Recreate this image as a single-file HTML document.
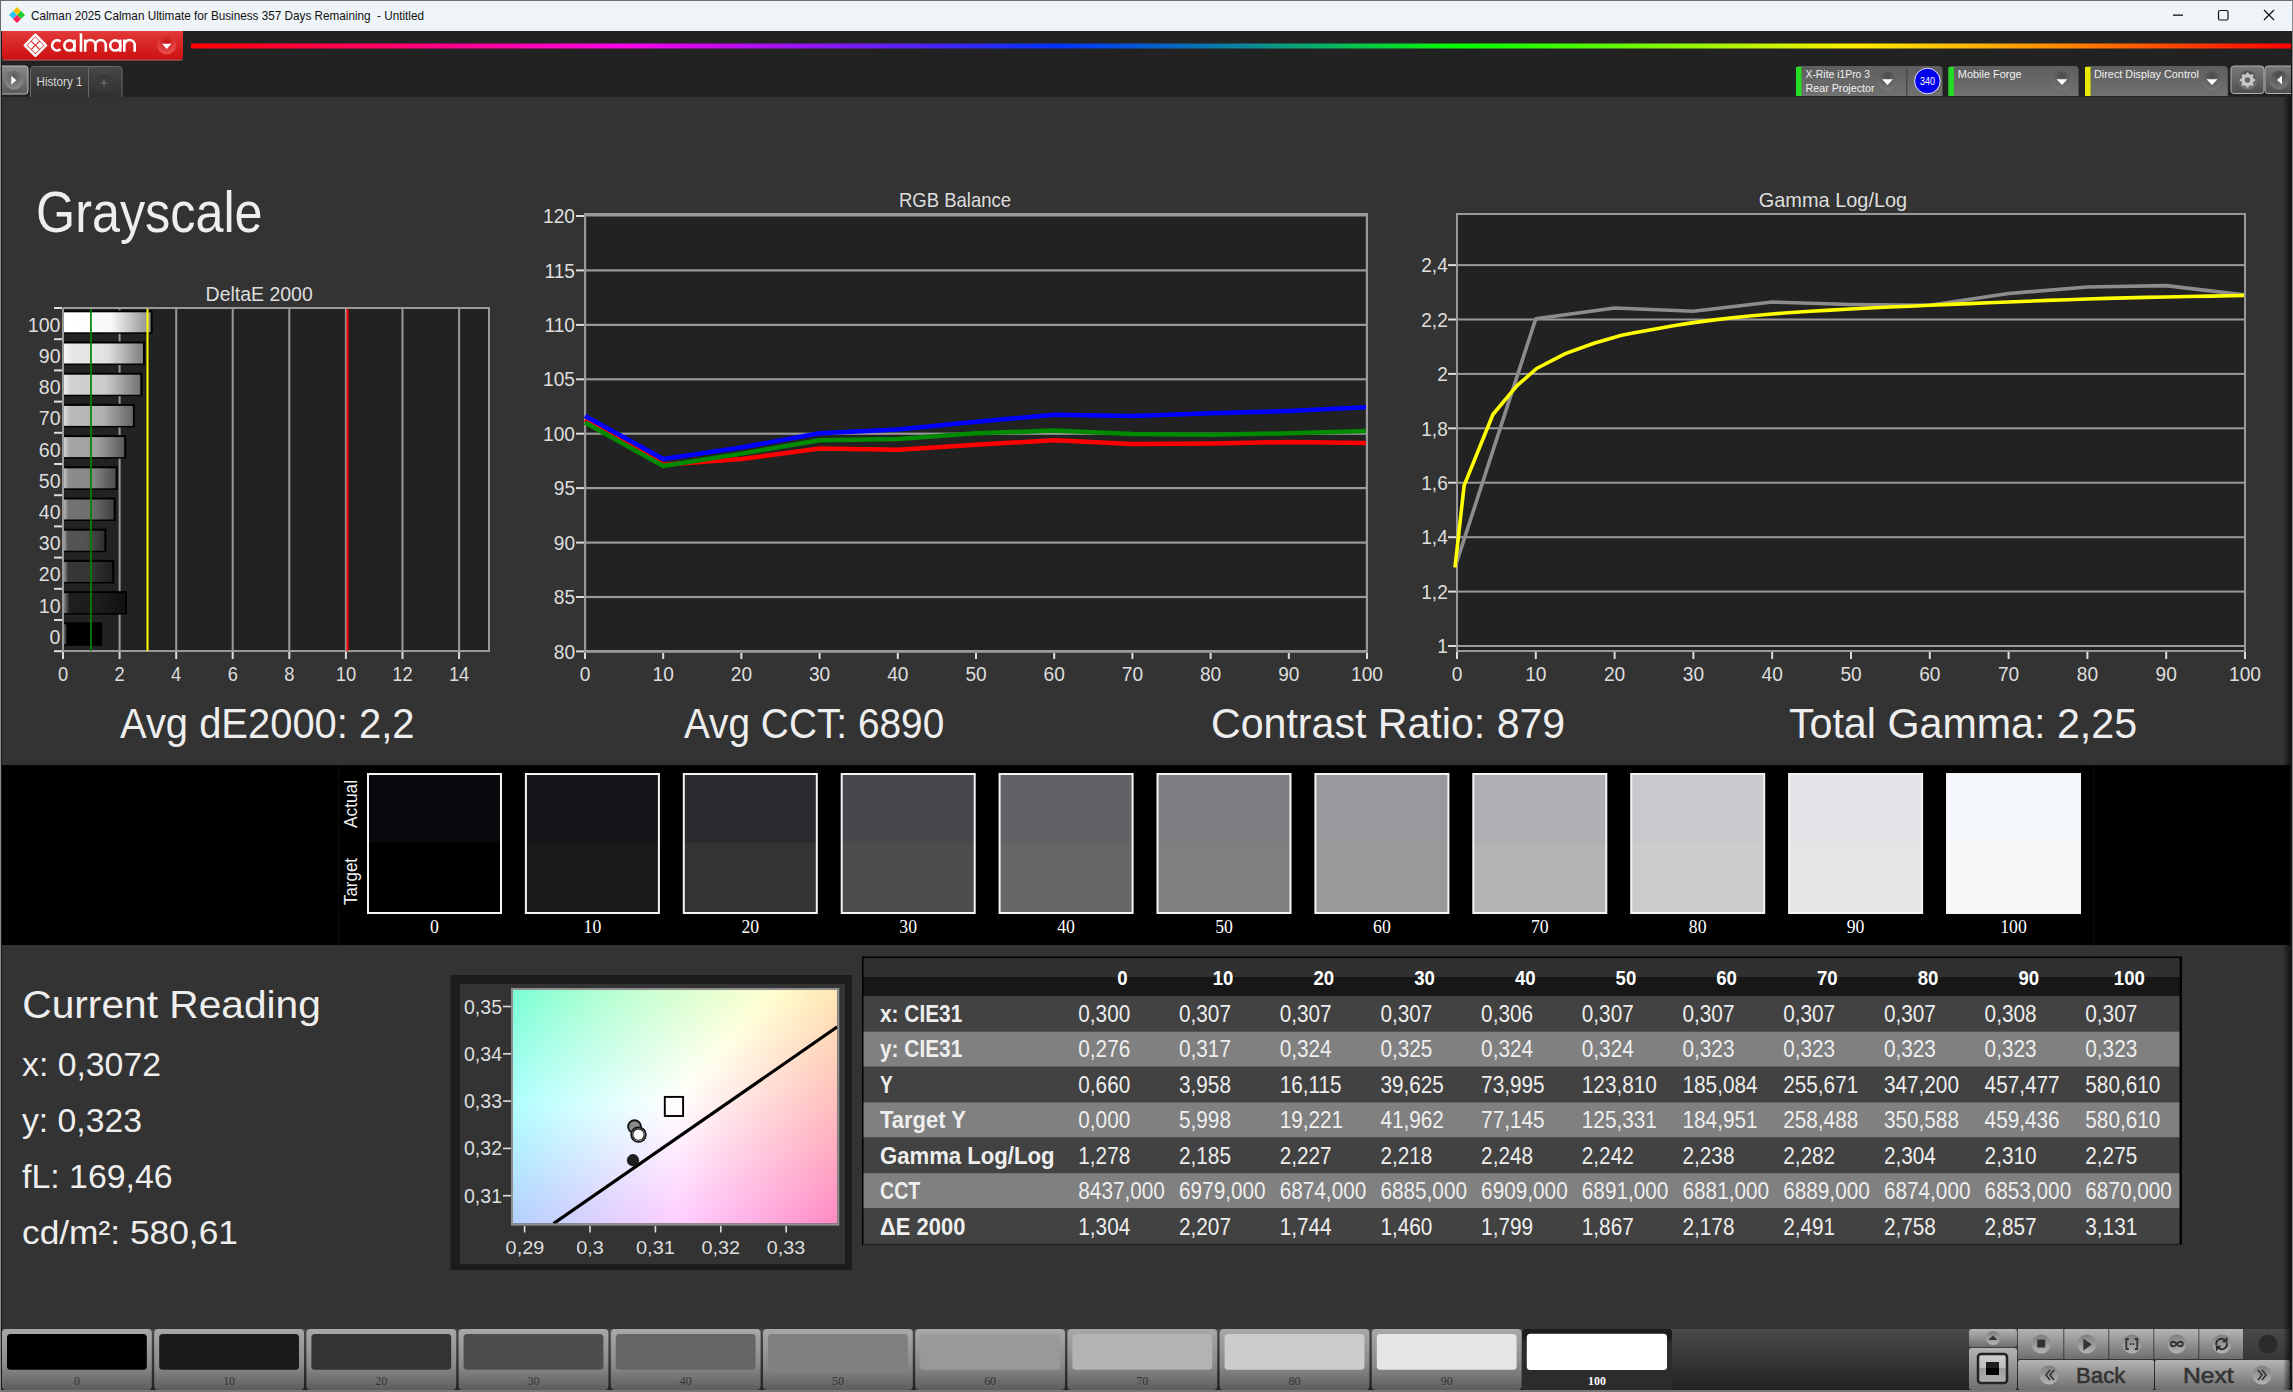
<!DOCTYPE html><html><head><meta charset="utf-8"><style>html,body{margin:0;padding:0;background:#333;overflow:hidden}svg{display:block}</style></head><body><svg width="2293" height="1392" viewBox="0 0 2293 1392" font-family="Liberation Sans"><defs><linearGradient id="gRed" x1="0" y1="0" x2="0" y2="1"><stop offset="0" stop-color="#e23a3a"/><stop offset="1" stop-color="#cc0e0e"/></linearGradient><radialGradient id="gRedBtn" cx="0.5" cy="0.3" r="0.6"><stop offset="0" stop-color="#c81414"/><stop offset="1" stop-color="#e84a4a"/></radialGradient><linearGradient id="gRain" x1="191" y1="0" x2="2293" y2="0" gradientUnits="userSpaceOnUse"><stop offset="0" stop-color="#ff0000"/><stop offset="0.204" stop-color="#ff00e6"/><stop offset="0.412" stop-color="#0033ff"/><stop offset="0.51" stop-color="#0d8f8f"/><stop offset="0.605" stop-color="#00ff00"/><stop offset="0.792" stop-color="#ffee00"/><stop offset="0.89" stop-color="#ff8800"/><stop offset="1" stop-color="#ff0000"/></linearGradient><linearGradient id="gBtn" x1="0" y1="0" x2="0" y2="1"><stop offset="0" stop-color="#8a8a8a"/><stop offset="1" stop-color="#5a5a5a"/></linearGradient><radialGradient id="gCirc" cx="0.5" cy="0.3" r="0.7"><stop offset="0" stop-color="#5b5b5b"/><stop offset="1" stop-color="#8c8c8c"/></radialGradient><linearGradient id="gTab" x1="0" y1="0" x2="0" y2="1"><stop offset="0" stop-color="#484848"/><stop offset="1" stop-color="#2f2f2f"/></linearGradient><linearGradient id="gDev" x1="0" y1="0" x2="0" y2="1"><stop offset="0" stop-color="#5e5e5e"/><stop offset="1" stop-color="#717171"/></linearGradient><radialGradient id="gDrop" cx="0.5" cy="0.2" r="0.8"><stop offset="0" stop-color="#4a4a4a"/><stop offset="1" stop-color="#787878"/></radialGradient><linearGradient id="gBtn2" x1="0" y1="0" x2="0" y2="1"><stop offset="0" stop-color="#7a7a7a"/><stop offset="1" stop-color="#4e4e4e"/></linearGradient><linearGradient id="gBar0" x1="0" y1="0" x2="1" y2="0"><stop offset="0" stop-color="#6e6e6e"/><stop offset="0.09" stop-color="#000000"/><stop offset="0.55" stop-color="#000000"/><stop offset="1" stop-color="#000000"/></linearGradient><linearGradient id="gBar1" x1="0" y1="0" x2="1" y2="0"><stop offset="0" stop-color="#808080"/><stop offset="0.09" stop-color="#1e1e1e"/><stop offset="0.55" stop-color="#1d1d1d"/><stop offset="1" stop-color="#101010"/></linearGradient><linearGradient id="gBar2" x1="0" y1="0" x2="1" y2="0"><stop offset="0" stop-color="#8f8f8f"/><stop offset="0.09" stop-color="#373737"/><stop offset="0.55" stop-color="#353535"/><stop offset="1" stop-color="#1e1e1e"/></linearGradient><linearGradient id="gBar3" x1="0" y1="0" x2="1" y2="0"><stop offset="0" stop-color="#a1a1a1"/><stop offset="0.09" stop-color="#555555"/><stop offset="0.55" stop-color="#525252"/><stop offset="1" stop-color="#2e2e2e"/></linearGradient><linearGradient id="gBar4" x1="0" y1="0" x2="1" y2="0"><stop offset="0" stop-color="#b3b3b3"/><stop offset="0.09" stop-color="#737373"/><stop offset="0.55" stop-color="#6f6f6f"/><stop offset="1" stop-color="#3f3f3f"/></linearGradient><linearGradient id="gBar5" x1="0" y1="0" x2="1" y2="0"><stop offset="0" stop-color="#c2c2c2"/><stop offset="0.09" stop-color="#8c8c8c"/><stop offset="0.55" stop-color="#878787"/><stop offset="1" stop-color="#4d4d4d"/></linearGradient><linearGradient id="gBar6" x1="0" y1="0" x2="1" y2="0"><stop offset="0" stop-color="#d1d1d1"/><stop offset="0.09" stop-color="#a5a5a5"/><stop offset="0.55" stop-color="#a0a0a0"/><stop offset="1" stop-color="#5a5a5a"/></linearGradient><linearGradient id="gBar7" x1="0" y1="0" x2="1" y2="0"><stop offset="0" stop-color="#dddddd"/><stop offset="0.09" stop-color="#b9b9b9"/><stop offset="0.55" stop-color="#b3b3b3"/><stop offset="1" stop-color="#656565"/></linearGradient><linearGradient id="gBar8" x1="0" y1="0" x2="1" y2="0"><stop offset="0" stop-color="#ececec"/><stop offset="0.09" stop-color="#d2d2d2"/><stop offset="0.55" stop-color="#cbcbcb"/><stop offset="1" stop-color="#737373"/></linearGradient><linearGradient id="gBar9" x1="0" y1="0" x2="1" y2="0"><stop offset="0" stop-color="#f9f9f9"/><stop offset="0.09" stop-color="#e8e8e8"/><stop offset="0.55" stop-color="#e1e1e1"/><stop offset="1" stop-color="#7f7f7f"/></linearGradient><linearGradient id="gBar10" x1="0" y1="0" x2="1" y2="0"><stop offset="0" stop-color="#ffffff"/><stop offset="0.09" stop-color="#ffffff"/><stop offset="0.55" stop-color="#f7f7f7"/><stop offset="1" stop-color="#8c8c8c"/></linearGradient><linearGradient id="gC0"><stop offset="0.0000" stop-color="#71ffd4"/><stop offset="0.0278" stop-color="#79ffd4"/><stop offset="0.0556" stop-color="#80ffd4"/><stop offset="0.0833" stop-color="#87ffd4"/><stop offset="0.1111" stop-color="#8effd4"/><stop offset="0.1389" stop-color="#94ffd4"/><stop offset="0.1667" stop-color="#9affd3"/><stop offset="0.1944" stop-color="#a0ffd3"/><stop offset="0.2222" stop-color="#a5ffd3"/><stop offset="0.2500" stop-color="#abffd3"/><stop offset="0.2778" stop-color="#b0ffd3"/><stop offset="0.3056" stop-color="#b5ffd3"/><stop offset="0.3333" stop-color="#baffd2"/><stop offset="0.3611" stop-color="#bfffd2"/><stop offset="0.3889" stop-color="#c4ffd2"/><stop offset="0.4167" stop-color="#c9ffd2"/><stop offset="0.4444" stop-color="#cdffd2"/><stop offset="0.4722" stop-color="#d2ffd1"/><stop offset="0.5000" stop-color="#d6ffd1"/><stop offset="0.5278" stop-color="#daffd1"/><stop offset="0.5556" stop-color="#dfffd1"/><stop offset="0.5833" stop-color="#e3ffd1"/><stop offset="0.6111" stop-color="#e7ffd1"/><stop offset="0.6389" stop-color="#ebffd0"/><stop offset="0.6667" stop-color="#efffd0"/><stop offset="0.6944" stop-color="#f3ffd0"/><stop offset="0.7222" stop-color="#f7ffd0"/><stop offset="0.7500" stop-color="#fbffd0"/><stop offset="0.7778" stop-color="#ffffcf"/><stop offset="0.8056" stop-color="#fffccc"/><stop offset="0.8333" stop-color="#fff8c8"/><stop offset="0.8611" stop-color="#fff4c4"/><stop offset="0.8889" stop-color="#fff0c0"/><stop offset="0.9167" stop-color="#ffedbb"/><stop offset="0.9444" stop-color="#ffe9b7"/><stop offset="0.9722" stop-color="#ffe6b3"/><stop offset="1.0000" stop-color="#ffe2af"/></linearGradient><linearGradient id="gC1"><stop offset="0.0000" stop-color="#76ffd8"/><stop offset="0.0278" stop-color="#7effd8"/><stop offset="0.0556" stop-color="#85ffd7"/><stop offset="0.0833" stop-color="#8cffd7"/><stop offset="0.1111" stop-color="#92ffd7"/><stop offset="0.1389" stop-color="#98ffd7"/><stop offset="0.1667" stop-color="#9effd7"/><stop offset="0.1944" stop-color="#a4ffd7"/><stop offset="0.2222" stop-color="#a9ffd7"/><stop offset="0.2500" stop-color="#afffd6"/><stop offset="0.2778" stop-color="#b4ffd6"/><stop offset="0.3056" stop-color="#b9ffd6"/><stop offset="0.3333" stop-color="#beffd6"/><stop offset="0.3611" stop-color="#c3ffd6"/><stop offset="0.3889" stop-color="#c7ffd6"/><stop offset="0.4167" stop-color="#ccffd5"/><stop offset="0.4444" stop-color="#d0ffd5"/><stop offset="0.4722" stop-color="#d5ffd5"/><stop offset="0.5000" stop-color="#d9ffd5"/><stop offset="0.5278" stop-color="#deffd5"/><stop offset="0.5556" stop-color="#e2ffd5"/><stop offset="0.5833" stop-color="#e6ffd4"/><stop offset="0.6111" stop-color="#eaffd4"/><stop offset="0.6389" stop-color="#eeffd4"/><stop offset="0.6667" stop-color="#f2ffd4"/><stop offset="0.6944" stop-color="#f6ffd4"/><stop offset="0.7222" stop-color="#faffd4"/><stop offset="0.7500" stop-color="#feffd3"/><stop offset="0.7778" stop-color="#fffcd0"/><stop offset="0.8056" stop-color="#fff8cc"/><stop offset="0.8333" stop-color="#fff5c8"/><stop offset="0.8611" stop-color="#fff1c4"/><stop offset="0.8889" stop-color="#ffedc0"/><stop offset="0.9167" stop-color="#ffeabc"/><stop offset="0.9444" stop-color="#ffe6b8"/><stop offset="0.9722" stop-color="#ffe2b4"/><stop offset="1.0000" stop-color="#ffdfb0"/></linearGradient><linearGradient id="gC2"><stop offset="0.0000" stop-color="#7bffdb"/><stop offset="0.0278" stop-color="#82ffdb"/><stop offset="0.0556" stop-color="#89ffdb"/><stop offset="0.0833" stop-color="#90ffdb"/><stop offset="0.1111" stop-color="#96ffdb"/><stop offset="0.1389" stop-color="#9cffdb"/><stop offset="0.1667" stop-color="#a2ffda"/><stop offset="0.1944" stop-color="#a8ffda"/><stop offset="0.2222" stop-color="#adffda"/><stop offset="0.2500" stop-color="#b2ffda"/><stop offset="0.2778" stop-color="#b8ffda"/><stop offset="0.3056" stop-color="#bdffda"/><stop offset="0.3333" stop-color="#c1ffda"/><stop offset="0.3611" stop-color="#c6ffd9"/><stop offset="0.3889" stop-color="#cbffd9"/><stop offset="0.4167" stop-color="#cfffd9"/><stop offset="0.4444" stop-color="#d4ffd9"/><stop offset="0.4722" stop-color="#d8ffd9"/><stop offset="0.5000" stop-color="#ddffd9"/><stop offset="0.5278" stop-color="#e1ffd8"/><stop offset="0.5556" stop-color="#e5ffd8"/><stop offset="0.5833" stop-color="#e9ffd8"/><stop offset="0.6111" stop-color="#edffd8"/><stop offset="0.6389" stop-color="#f1ffd8"/><stop offset="0.6667" stop-color="#f5ffd8"/><stop offset="0.6944" stop-color="#f9ffd8"/><stop offset="0.7222" stop-color="#fdffd7"/><stop offset="0.7500" stop-color="#fffdd5"/><stop offset="0.7778" stop-color="#fff9d1"/><stop offset="0.8056" stop-color="#fff5cd"/><stop offset="0.8333" stop-color="#fff2c9"/><stop offset="0.8611" stop-color="#ffeec5"/><stop offset="0.8889" stop-color="#ffeac1"/><stop offset="0.9167" stop-color="#ffe6bd"/><stop offset="0.9444" stop-color="#ffe3b9"/><stop offset="0.9722" stop-color="#ffdfb5"/><stop offset="1.0000" stop-color="#ffdcb1"/></linearGradient><linearGradient id="gC3"><stop offset="0.0000" stop-color="#80ffdf"/><stop offset="0.0278" stop-color="#87ffdf"/><stop offset="0.0556" stop-color="#8effde"/><stop offset="0.0833" stop-color="#94ffde"/><stop offset="0.1111" stop-color="#9affde"/><stop offset="0.1389" stop-color="#a0ffde"/><stop offset="0.1667" stop-color="#a6ffde"/><stop offset="0.1944" stop-color="#acffde"/><stop offset="0.2222" stop-color="#b1ffde"/><stop offset="0.2500" stop-color="#b6ffde"/><stop offset="0.2778" stop-color="#bbffdd"/><stop offset="0.3056" stop-color="#c0ffdd"/><stop offset="0.3333" stop-color="#c5ffdd"/><stop offset="0.3611" stop-color="#caffdd"/><stop offset="0.3889" stop-color="#ceffdd"/><stop offset="0.4167" stop-color="#d3ffdd"/><stop offset="0.4444" stop-color="#d7ffdd"/><stop offset="0.4722" stop-color="#dcffdc"/><stop offset="0.5000" stop-color="#e0ffdc"/><stop offset="0.5278" stop-color="#e4ffdc"/><stop offset="0.5556" stop-color="#e8ffdc"/><stop offset="0.5833" stop-color="#edffdc"/><stop offset="0.6111" stop-color="#f1ffdc"/><stop offset="0.6389" stop-color="#f5ffdc"/><stop offset="0.6667" stop-color="#f9ffdb"/><stop offset="0.6944" stop-color="#fdffdb"/><stop offset="0.7222" stop-color="#fffeda"/><stop offset="0.7500" stop-color="#fffad6"/><stop offset="0.7778" stop-color="#fff6d2"/><stop offset="0.8056" stop-color="#fff2ce"/><stop offset="0.8333" stop-color="#ffeeca"/><stop offset="0.8611" stop-color="#ffebc6"/><stop offset="0.8889" stop-color="#ffe7c2"/><stop offset="0.9167" stop-color="#ffe3be"/><stop offset="0.9444" stop-color="#ffe0ba"/><stop offset="0.9722" stop-color="#ffdcb6"/><stop offset="1.0000" stop-color="#ffd8b2"/></linearGradient><linearGradient id="gC4"><stop offset="0.0000" stop-color="#85ffe2"/><stop offset="0.0278" stop-color="#8cffe2"/><stop offset="0.0556" stop-color="#92ffe2"/><stop offset="0.0833" stop-color="#99ffe2"/><stop offset="0.1111" stop-color="#9fffe2"/><stop offset="0.1389" stop-color="#a4ffe1"/><stop offset="0.1667" stop-color="#aaffe1"/><stop offset="0.1944" stop-color="#afffe1"/><stop offset="0.2222" stop-color="#b5ffe1"/><stop offset="0.2500" stop-color="#baffe1"/><stop offset="0.2778" stop-color="#bfffe1"/><stop offset="0.3056" stop-color="#c4ffe1"/><stop offset="0.3333" stop-color="#c8ffe1"/><stop offset="0.3611" stop-color="#cdffe1"/><stop offset="0.3889" stop-color="#d2ffe0"/><stop offset="0.4167" stop-color="#d6ffe0"/><stop offset="0.4444" stop-color="#dbffe0"/><stop offset="0.4722" stop-color="#dfffe0"/><stop offset="0.5000" stop-color="#e3ffe0"/><stop offset="0.5278" stop-color="#e8ffe0"/><stop offset="0.5556" stop-color="#ecffe0"/><stop offset="0.5833" stop-color="#f0ffe0"/><stop offset="0.6111" stop-color="#f4ffdf"/><stop offset="0.6389" stop-color="#f8ffdf"/><stop offset="0.6667" stop-color="#fcffdf"/><stop offset="0.6944" stop-color="#fffede"/><stop offset="0.7222" stop-color="#fffada"/><stop offset="0.7500" stop-color="#fff6d6"/><stop offset="0.7778" stop-color="#fff3d2"/><stop offset="0.8056" stop-color="#ffefce"/><stop offset="0.8333" stop-color="#ffebca"/><stop offset="0.8611" stop-color="#ffe7c6"/><stop offset="0.8889" stop-color="#ffe4c2"/><stop offset="0.9167" stop-color="#ffe0be"/><stop offset="0.9444" stop-color="#ffdcba"/><stop offset="0.9722" stop-color="#ffd9b7"/><stop offset="1.0000" stop-color="#ffd5b3"/></linearGradient><linearGradient id="gC5"><stop offset="0.0000" stop-color="#89ffe5"/><stop offset="0.0278" stop-color="#90ffe5"/><stop offset="0.0556" stop-color="#97ffe5"/><stop offset="0.0833" stop-color="#9dffe5"/><stop offset="0.1111" stop-color="#a3ffe5"/><stop offset="0.1389" stop-color="#a8ffe5"/><stop offset="0.1667" stop-color="#aeffe5"/><stop offset="0.1944" stop-color="#b3ffe5"/><stop offset="0.2222" stop-color="#b8ffe5"/><stop offset="0.2500" stop-color="#bdffe5"/><stop offset="0.2778" stop-color="#c2ffe4"/><stop offset="0.3056" stop-color="#c7ffe4"/><stop offset="0.3333" stop-color="#ccffe4"/><stop offset="0.3611" stop-color="#d1ffe4"/><stop offset="0.3889" stop-color="#d5ffe4"/><stop offset="0.4167" stop-color="#daffe4"/><stop offset="0.4444" stop-color="#deffe4"/><stop offset="0.4722" stop-color="#e2ffe4"/><stop offset="0.5000" stop-color="#e7ffe4"/><stop offset="0.5278" stop-color="#ebffe4"/><stop offset="0.5556" stop-color="#efffe3"/><stop offset="0.5833" stop-color="#f3ffe3"/><stop offset="0.6111" stop-color="#f7ffe3"/><stop offset="0.6389" stop-color="#fbffe3"/><stop offset="0.6667" stop-color="#ffffe3"/><stop offset="0.6944" stop-color="#fffbdf"/><stop offset="0.7222" stop-color="#fff7db"/><stop offset="0.7500" stop-color="#fff3d7"/><stop offset="0.7778" stop-color="#ffefd3"/><stop offset="0.8056" stop-color="#ffeccf"/><stop offset="0.8333" stop-color="#ffe8cb"/><stop offset="0.8611" stop-color="#ffe4c7"/><stop offset="0.8889" stop-color="#ffe0c3"/><stop offset="0.9167" stop-color="#ffddbf"/><stop offset="0.9444" stop-color="#ffd9bb"/><stop offset="0.9722" stop-color="#ffd6b7"/><stop offset="1.0000" stop-color="#ffd2b3"/></linearGradient><linearGradient id="gC6"><stop offset="0.0000" stop-color="#8effe9"/><stop offset="0.0278" stop-color="#95ffe9"/><stop offset="0.0556" stop-color="#9bffe9"/><stop offset="0.0833" stop-color="#a1ffe9"/><stop offset="0.1111" stop-color="#a7ffe9"/><stop offset="0.1389" stop-color="#acffe8"/><stop offset="0.1667" stop-color="#b2ffe8"/><stop offset="0.1944" stop-color="#b7ffe8"/><stop offset="0.2222" stop-color="#bcffe8"/><stop offset="0.2500" stop-color="#c1ffe8"/><stop offset="0.2778" stop-color="#c6ffe8"/><stop offset="0.3056" stop-color="#cbffe8"/><stop offset="0.3333" stop-color="#d0ffe8"/><stop offset="0.3611" stop-color="#d4ffe8"/><stop offset="0.3889" stop-color="#d9ffe8"/><stop offset="0.4167" stop-color="#ddffe8"/><stop offset="0.4444" stop-color="#e2ffe8"/><stop offset="0.4722" stop-color="#e6ffe7"/><stop offset="0.5000" stop-color="#eaffe7"/><stop offset="0.5278" stop-color="#eeffe7"/><stop offset="0.5556" stop-color="#f2ffe7"/><stop offset="0.5833" stop-color="#f7ffe7"/><stop offset="0.6111" stop-color="#fbffe7"/><stop offset="0.6389" stop-color="#ffffe7"/><stop offset="0.6667" stop-color="#fffbe3"/><stop offset="0.6944" stop-color="#fff8df"/><stop offset="0.7222" stop-color="#fff4db"/><stop offset="0.7500" stop-color="#fff0d7"/><stop offset="0.7778" stop-color="#ffecd3"/><stop offset="0.8056" stop-color="#ffe8cf"/><stop offset="0.8333" stop-color="#ffe5cb"/><stop offset="0.8611" stop-color="#ffe1c8"/><stop offset="0.8889" stop-color="#ffddc4"/><stop offset="0.9167" stop-color="#ffdac0"/><stop offset="0.9444" stop-color="#ffd6bc"/><stop offset="0.9722" stop-color="#ffd2b8"/><stop offset="1.0000" stop-color="#ffcfb4"/></linearGradient><linearGradient id="gC7"><stop offset="0.0000" stop-color="#93ffec"/><stop offset="0.0278" stop-color="#99ffec"/><stop offset="0.0556" stop-color="#9fffec"/><stop offset="0.0833" stop-color="#a5ffec"/><stop offset="0.1111" stop-color="#abffec"/><stop offset="0.1389" stop-color="#b0ffec"/><stop offset="0.1667" stop-color="#b6ffec"/><stop offset="0.1944" stop-color="#bbffec"/><stop offset="0.2222" stop-color="#c0ffec"/><stop offset="0.2500" stop-color="#c5ffec"/><stop offset="0.2778" stop-color="#caffec"/><stop offset="0.3056" stop-color="#ceffec"/><stop offset="0.3333" stop-color="#d3ffeb"/><stop offset="0.3611" stop-color="#d8ffeb"/><stop offset="0.3889" stop-color="#dcffeb"/><stop offset="0.4167" stop-color="#e1ffeb"/><stop offset="0.4444" stop-color="#e5ffeb"/><stop offset="0.4722" stop-color="#e9ffeb"/><stop offset="0.5000" stop-color="#edffeb"/><stop offset="0.5278" stop-color="#f2ffeb"/><stop offset="0.5556" stop-color="#f6ffeb"/><stop offset="0.5833" stop-color="#faffeb"/><stop offset="0.6111" stop-color="#feffeb"/><stop offset="0.6389" stop-color="#fffce8"/><stop offset="0.6667" stop-color="#fff8e4"/><stop offset="0.6944" stop-color="#fff4e0"/><stop offset="0.7222" stop-color="#fff0dc"/><stop offset="0.7500" stop-color="#ffedd8"/><stop offset="0.7778" stop-color="#ffe9d4"/><stop offset="0.8056" stop-color="#ffe5d0"/><stop offset="0.8333" stop-color="#ffe1cc"/><stop offset="0.8611" stop-color="#ffdec8"/><stop offset="0.8889" stop-color="#ffdac4"/><stop offset="0.9167" stop-color="#ffd6c1"/><stop offset="0.9444" stop-color="#ffd3bd"/><stop offset="0.9722" stop-color="#ffcfb9"/><stop offset="1.0000" stop-color="#ffcbb5"/></linearGradient><linearGradient id="gC8"><stop offset="0.0000" stop-color="#97fff0"/><stop offset="0.0278" stop-color="#9dfff0"/><stop offset="0.0556" stop-color="#a3fff0"/><stop offset="0.0833" stop-color="#a9fff0"/><stop offset="0.1111" stop-color="#affff0"/><stop offset="0.1389" stop-color="#b4ffef"/><stop offset="0.1667" stop-color="#b9ffef"/><stop offset="0.1944" stop-color="#bfffef"/><stop offset="0.2222" stop-color="#c4ffef"/><stop offset="0.2500" stop-color="#c8ffef"/><stop offset="0.2778" stop-color="#cdffef"/><stop offset="0.3056" stop-color="#d2ffef"/><stop offset="0.3333" stop-color="#d7ffef"/><stop offset="0.3611" stop-color="#dbffef"/><stop offset="0.3889" stop-color="#e0ffef"/><stop offset="0.4167" stop-color="#e4ffef"/><stop offset="0.4444" stop-color="#e8ffef"/><stop offset="0.4722" stop-color="#edffef"/><stop offset="0.5000" stop-color="#f1ffef"/><stop offset="0.5278" stop-color="#f5ffef"/><stop offset="0.5556" stop-color="#f9ffef"/><stop offset="0.5833" stop-color="#fdffef"/><stop offset="0.6111" stop-color="#fffdec"/><stop offset="0.6389" stop-color="#fff9e8"/><stop offset="0.6667" stop-color="#fff5e4"/><stop offset="0.6944" stop-color="#fff1e0"/><stop offset="0.7222" stop-color="#ffeddc"/><stop offset="0.7500" stop-color="#ffe9d8"/><stop offset="0.7778" stop-color="#ffe5d4"/><stop offset="0.8056" stop-color="#ffe2d1"/><stop offset="0.8333" stop-color="#ffdecd"/><stop offset="0.8611" stop-color="#ffdac9"/><stop offset="0.8889" stop-color="#ffd7c5"/><stop offset="0.9167" stop-color="#ffd3c1"/><stop offset="0.9444" stop-color="#ffcfbd"/><stop offset="0.9722" stop-color="#ffccba"/><stop offset="1.0000" stop-color="#ffc8b6"/></linearGradient><linearGradient id="gC9"><stop offset="0.0000" stop-color="#9bfff3"/><stop offset="0.0278" stop-color="#a1fff3"/><stop offset="0.0556" stop-color="#a7fff3"/><stop offset="0.0833" stop-color="#adfff3"/><stop offset="0.1111" stop-color="#b3fff3"/><stop offset="0.1389" stop-color="#b8fff3"/><stop offset="0.1667" stop-color="#bdfff3"/><stop offset="0.1944" stop-color="#c2fff3"/><stop offset="0.2222" stop-color="#c7fff3"/><stop offset="0.2500" stop-color="#ccfff3"/><stop offset="0.2778" stop-color="#d1fff3"/><stop offset="0.3056" stop-color="#d6fff3"/><stop offset="0.3333" stop-color="#dafff3"/><stop offset="0.3611" stop-color="#dffff3"/><stop offset="0.3889" stop-color="#e3fff3"/><stop offset="0.4167" stop-color="#e7fff3"/><stop offset="0.4444" stop-color="#ecfff2"/><stop offset="0.4722" stop-color="#f0fff2"/><stop offset="0.5000" stop-color="#f4fff2"/><stop offset="0.5278" stop-color="#f8fff2"/><stop offset="0.5556" stop-color="#fdfff2"/><stop offset="0.5833" stop-color="#fffdf1"/><stop offset="0.6111" stop-color="#fff9ed"/><stop offset="0.6389" stop-color="#fff5e9"/><stop offset="0.6667" stop-color="#fff2e5"/><stop offset="0.6944" stop-color="#ffeee1"/><stop offset="0.7222" stop-color="#ffeadd"/><stop offset="0.7500" stop-color="#ffe6d9"/><stop offset="0.7778" stop-color="#ffe2d5"/><stop offset="0.8056" stop-color="#ffded1"/><stop offset="0.8333" stop-color="#ffdbcd"/><stop offset="0.8611" stop-color="#ffd7c9"/><stop offset="0.8889" stop-color="#ffd3c6"/><stop offset="0.9167" stop-color="#ffd0c2"/><stop offset="0.9444" stop-color="#ffccbe"/><stop offset="0.9722" stop-color="#ffc8ba"/><stop offset="1.0000" stop-color="#ffc5b7"/></linearGradient><linearGradient id="gC10"><stop offset="0.0000" stop-color="#a0fff7"/><stop offset="0.0278" stop-color="#a6fff7"/><stop offset="0.0556" stop-color="#abfff7"/><stop offset="0.0833" stop-color="#b1fff7"/><stop offset="0.1111" stop-color="#b6fff6"/><stop offset="0.1389" stop-color="#bcfff6"/><stop offset="0.1667" stop-color="#c1fff6"/><stop offset="0.1944" stop-color="#c6fff6"/><stop offset="0.2222" stop-color="#cbfff6"/><stop offset="0.2500" stop-color="#d0fff6"/><stop offset="0.2778" stop-color="#d4fff6"/><stop offset="0.3056" stop-color="#d9fff6"/><stop offset="0.3333" stop-color="#defff6"/><stop offset="0.3611" stop-color="#e2fff6"/><stop offset="0.3889" stop-color="#e7fff6"/><stop offset="0.4167" stop-color="#ebfff6"/><stop offset="0.4444" stop-color="#effff6"/><stop offset="0.4722" stop-color="#f3fff6"/><stop offset="0.5000" stop-color="#f8fff6"/><stop offset="0.5278" stop-color="#fcfff6"/><stop offset="0.5556" stop-color="#fffef5"/><stop offset="0.5833" stop-color="#fffaf1"/><stop offset="0.6111" stop-color="#fff6ed"/><stop offset="0.6389" stop-color="#fff2e9"/><stop offset="0.6667" stop-color="#ffeee5"/><stop offset="0.6944" stop-color="#ffeae1"/><stop offset="0.7222" stop-color="#ffe6dd"/><stop offset="0.7500" stop-color="#ffe3d9"/><stop offset="0.7778" stop-color="#ffdfd5"/><stop offset="0.8056" stop-color="#ffdbd2"/><stop offset="0.8333" stop-color="#ffd7ce"/><stop offset="0.8611" stop-color="#ffd4ca"/><stop offset="0.8889" stop-color="#ffd0c6"/><stop offset="0.9167" stop-color="#ffccc3"/><stop offset="0.9444" stop-color="#ffc9bf"/><stop offset="0.9722" stop-color="#ffc5bb"/><stop offset="1.0000" stop-color="#ffc1b7"/></linearGradient><linearGradient id="gC11"><stop offset="0.0000" stop-color="#a4fffa"/><stop offset="0.0278" stop-color="#aafffa"/><stop offset="0.0556" stop-color="#affffa"/><stop offset="0.0833" stop-color="#b5fffa"/><stop offset="0.1111" stop-color="#bafffa"/><stop offset="0.1389" stop-color="#c0fffa"/><stop offset="0.1667" stop-color="#c5fffa"/><stop offset="0.1944" stop-color="#cafffa"/><stop offset="0.2222" stop-color="#cffffa"/><stop offset="0.2500" stop-color="#d3fffa"/><stop offset="0.2778" stop-color="#d8fffa"/><stop offset="0.3056" stop-color="#ddfffa"/><stop offset="0.3333" stop-color="#e1fffa"/><stop offset="0.3611" stop-color="#e6fffa"/><stop offset="0.3889" stop-color="#eafffa"/><stop offset="0.4167" stop-color="#eefffa"/><stop offset="0.4444" stop-color="#f3fffa"/><stop offset="0.4722" stop-color="#f7fffa"/><stop offset="0.5000" stop-color="#fbfffa"/><stop offset="0.5278" stop-color="#fffffa"/><stop offset="0.5556" stop-color="#fffbf5"/><stop offset="0.5833" stop-color="#fff7f1"/><stop offset="0.6111" stop-color="#fff3ed"/><stop offset="0.6389" stop-color="#ffefe9"/><stop offset="0.6667" stop-color="#ffebe5"/><stop offset="0.6944" stop-color="#ffe7e2"/><stop offset="0.7222" stop-color="#ffe3de"/><stop offset="0.7500" stop-color="#ffdfda"/><stop offset="0.7778" stop-color="#ffdbd6"/><stop offset="0.8056" stop-color="#ffd8d2"/><stop offset="0.8333" stop-color="#ffd4ce"/><stop offset="0.8611" stop-color="#ffd0cb"/><stop offset="0.8889" stop-color="#ffccc7"/><stop offset="0.9167" stop-color="#ffc9c3"/><stop offset="0.9444" stop-color="#ffc5bf"/><stop offset="0.9722" stop-color="#ffc1bc"/><stop offset="1.0000" stop-color="#ffbeb8"/></linearGradient><linearGradient id="gC12"><stop offset="0.0000" stop-color="#a8fffe"/><stop offset="0.0278" stop-color="#aefffe"/><stop offset="0.0556" stop-color="#b3fffe"/><stop offset="0.0833" stop-color="#b9fffe"/><stop offset="0.1111" stop-color="#befffe"/><stop offset="0.1389" stop-color="#c3fffe"/><stop offset="0.1667" stop-color="#c8fffe"/><stop offset="0.1944" stop-color="#cdfffe"/><stop offset="0.2222" stop-color="#d2fffe"/><stop offset="0.2500" stop-color="#d7fffe"/><stop offset="0.2778" stop-color="#dcfffe"/><stop offset="0.3056" stop-color="#e0fffe"/><stop offset="0.3333" stop-color="#e5fffe"/><stop offset="0.3611" stop-color="#e9fffe"/><stop offset="0.3889" stop-color="#eefffe"/><stop offset="0.4167" stop-color="#f2fffe"/><stop offset="0.4444" stop-color="#f6fffe"/><stop offset="0.4722" stop-color="#fafffe"/><stop offset="0.5000" stop-color="#fffffe"/><stop offset="0.5278" stop-color="#fffbfa"/><stop offset="0.5556" stop-color="#fff7f6"/><stop offset="0.5833" stop-color="#fff3f2"/><stop offset="0.6111" stop-color="#ffefee"/><stop offset="0.6389" stop-color="#ffebea"/><stop offset="0.6667" stop-color="#ffe7e6"/><stop offset="0.6944" stop-color="#ffe3e2"/><stop offset="0.7222" stop-color="#ffe0de"/><stop offset="0.7500" stop-color="#ffdcda"/><stop offset="0.7778" stop-color="#ffd8d7"/><stop offset="0.8056" stop-color="#ffd4d3"/><stop offset="0.8333" stop-color="#ffd0cf"/><stop offset="0.8611" stop-color="#ffcdcb"/><stop offset="0.8889" stop-color="#ffc9c8"/><stop offset="0.9167" stop-color="#ffc5c4"/><stop offset="0.9444" stop-color="#ffc2c0"/><stop offset="0.9722" stop-color="#ffbebc"/><stop offset="1.0000" stop-color="#ffbab9"/></linearGradient><linearGradient id="gC13"><stop offset="0.0000" stop-color="#aafdff"/><stop offset="0.0278" stop-color="#b0fdff"/><stop offset="0.0556" stop-color="#b5fdff"/><stop offset="0.0833" stop-color="#bbfdff"/><stop offset="0.1111" stop-color="#c0fdff"/><stop offset="0.1389" stop-color="#c5fdff"/><stop offset="0.1667" stop-color="#cafdff"/><stop offset="0.1944" stop-color="#cffdff"/><stop offset="0.2222" stop-color="#d4fdff"/><stop offset="0.2500" stop-color="#d8fdff"/><stop offset="0.2778" stop-color="#ddfdff"/><stop offset="0.3056" stop-color="#e2fdff"/><stop offset="0.3333" stop-color="#e6fdff"/><stop offset="0.3611" stop-color="#ebfdff"/><stop offset="0.3889" stop-color="#effdff"/><stop offset="0.4167" stop-color="#f3fdff"/><stop offset="0.4444" stop-color="#f7fdff"/><stop offset="0.4722" stop-color="#fcfdff"/><stop offset="0.5000" stop-color="#fffcfe"/><stop offset="0.5278" stop-color="#fff8fa"/><stop offset="0.5556" stop-color="#fff4f6"/><stop offset="0.5833" stop-color="#fff0f2"/><stop offset="0.6111" stop-color="#ffecee"/><stop offset="0.6389" stop-color="#ffe8ea"/><stop offset="0.6667" stop-color="#ffe4e6"/><stop offset="0.6944" stop-color="#ffe0e2"/><stop offset="0.7222" stop-color="#ffdcdf"/><stop offset="0.7500" stop-color="#ffd8db"/><stop offset="0.7778" stop-color="#ffd5d7"/><stop offset="0.8056" stop-color="#ffd1d3"/><stop offset="0.8333" stop-color="#ffcdd0"/><stop offset="0.8611" stop-color="#ffc9cc"/><stop offset="0.8889" stop-color="#ffc6c8"/><stop offset="0.9167" stop-color="#ffc2c4"/><stop offset="0.9444" stop-color="#ffbec1"/><stop offset="0.9722" stop-color="#ffbabd"/><stop offset="1.0000" stop-color="#ffb7b9"/></linearGradient><linearGradient id="gC14"><stop offset="0.0000" stop-color="#aafaff"/><stop offset="0.0278" stop-color="#b0faff"/><stop offset="0.0556" stop-color="#b6f9ff"/><stop offset="0.0833" stop-color="#bbf9ff"/><stop offset="0.1111" stop-color="#c0f9ff"/><stop offset="0.1389" stop-color="#c5f9ff"/><stop offset="0.1667" stop-color="#caf9ff"/><stop offset="0.1944" stop-color="#cff9ff"/><stop offset="0.2222" stop-color="#d4f9ff"/><stop offset="0.2500" stop-color="#d8f9ff"/><stop offset="0.2778" stop-color="#ddf9ff"/><stop offset="0.3056" stop-color="#e2f9ff"/><stop offset="0.3333" stop-color="#e6f9ff"/><stop offset="0.3611" stop-color="#eaf9ff"/><stop offset="0.3889" stop-color="#eff9ff"/><stop offset="0.4167" stop-color="#f3f9ff"/><stop offset="0.4444" stop-color="#f7f9ff"/><stop offset="0.4722" stop-color="#fbf9ff"/><stop offset="0.5000" stop-color="#fff9ff"/><stop offset="0.5278" stop-color="#fff4fa"/><stop offset="0.5556" stop-color="#fff0f6"/><stop offset="0.5833" stop-color="#ffecf2"/><stop offset="0.6111" stop-color="#ffe8ef"/><stop offset="0.6389" stop-color="#ffe4eb"/><stop offset="0.6667" stop-color="#ffe0e7"/><stop offset="0.6944" stop-color="#ffdde3"/><stop offset="0.7222" stop-color="#ffd9df"/><stop offset="0.7500" stop-color="#ffd5db"/><stop offset="0.7778" stop-color="#ffd1d8"/><stop offset="0.8056" stop-color="#ffcdd4"/><stop offset="0.8333" stop-color="#ffcad0"/><stop offset="0.8611" stop-color="#ffc6cc"/><stop offset="0.8889" stop-color="#ffc2c9"/><stop offset="0.9167" stop-color="#ffbec5"/><stop offset="0.9444" stop-color="#ffbbc1"/><stop offset="0.9722" stop-color="#ffb7be"/><stop offset="1.0000" stop-color="#ffb3ba"/></linearGradient><linearGradient id="gC15"><stop offset="0.0000" stop-color="#abf6ff"/><stop offset="0.0278" stop-color="#b0f6ff"/><stop offset="0.0556" stop-color="#b6f6ff"/><stop offset="0.0833" stop-color="#bbf6ff"/><stop offset="0.1111" stop-color="#c0f6ff"/><stop offset="0.1389" stop-color="#c5f6ff"/><stop offset="0.1667" stop-color="#caf6ff"/><stop offset="0.1944" stop-color="#cff6ff"/><stop offset="0.2222" stop-color="#d4f6ff"/><stop offset="0.2500" stop-color="#d8f6ff"/><stop offset="0.2778" stop-color="#ddf6ff"/><stop offset="0.3056" stop-color="#e2f6ff"/><stop offset="0.3333" stop-color="#e6f6ff"/><stop offset="0.3611" stop-color="#eaf5ff"/><stop offset="0.3889" stop-color="#eff5ff"/><stop offset="0.4167" stop-color="#f3f5ff"/><stop offset="0.4444" stop-color="#f7f5ff"/><stop offset="0.4722" stop-color="#fbf5ff"/><stop offset="0.5000" stop-color="#fff5ff"/><stop offset="0.5278" stop-color="#fff1fb"/><stop offset="0.5556" stop-color="#ffedf7"/><stop offset="0.5833" stop-color="#ffe9f3"/><stop offset="0.6111" stop-color="#ffe5ef"/><stop offset="0.6389" stop-color="#ffe1eb"/><stop offset="0.6667" stop-color="#ffdde7"/><stop offset="0.6944" stop-color="#ffd9e3"/><stop offset="0.7222" stop-color="#ffd5e0"/><stop offset="0.7500" stop-color="#ffd1dc"/><stop offset="0.7778" stop-color="#ffced8"/><stop offset="0.8056" stop-color="#ffcad4"/><stop offset="0.8333" stop-color="#ffc6d1"/><stop offset="0.8611" stop-color="#ffc2cd"/><stop offset="0.8889" stop-color="#ffbec9"/><stop offset="0.9167" stop-color="#ffbbc6"/><stop offset="0.9444" stop-color="#ffb7c2"/><stop offset="0.9722" stop-color="#ffb3be"/><stop offset="1.0000" stop-color="#ffafbb"/></linearGradient><linearGradient id="gC16"><stop offset="0.0000" stop-color="#abf3ff"/><stop offset="0.0278" stop-color="#b1f2ff"/><stop offset="0.0556" stop-color="#b6f2ff"/><stop offset="0.0833" stop-color="#bbf2ff"/><stop offset="0.1111" stop-color="#c0f2ff"/><stop offset="0.1389" stop-color="#c5f2ff"/><stop offset="0.1667" stop-color="#caf2ff"/><stop offset="0.1944" stop-color="#cff2ff"/><stop offset="0.2222" stop-color="#d4f2ff"/><stop offset="0.2500" stop-color="#d8f2ff"/><stop offset="0.2778" stop-color="#ddf2ff"/><stop offset="0.3056" stop-color="#e1f2ff"/><stop offset="0.3333" stop-color="#e6f2ff"/><stop offset="0.3611" stop-color="#eaf2ff"/><stop offset="0.3889" stop-color="#eef2ff"/><stop offset="0.4167" stop-color="#f3f2ff"/><stop offset="0.4444" stop-color="#f7f2ff"/><stop offset="0.4722" stop-color="#fbf2ff"/><stop offset="0.5000" stop-color="#fff1ff"/><stop offset="0.5278" stop-color="#ffedfb"/><stop offset="0.5556" stop-color="#ffe9f7"/><stop offset="0.5833" stop-color="#ffe5f3"/><stop offset="0.6111" stop-color="#ffe1ef"/><stop offset="0.6389" stop-color="#ffddeb"/><stop offset="0.6667" stop-color="#ffdae8"/><stop offset="0.6944" stop-color="#ffd6e4"/><stop offset="0.7222" stop-color="#ffd2e0"/><stop offset="0.7500" stop-color="#ffcedc"/><stop offset="0.7778" stop-color="#ffcad9"/><stop offset="0.8056" stop-color="#ffc6d5"/><stop offset="0.8333" stop-color="#ffc2d1"/><stop offset="0.8611" stop-color="#ffbfce"/><stop offset="0.8889" stop-color="#ffbbca"/><stop offset="0.9167" stop-color="#ffb7c6"/><stop offset="0.9444" stop-color="#ffb3c3"/><stop offset="0.9722" stop-color="#ffafbf"/><stop offset="1.0000" stop-color="#ffacbb"/></linearGradient><linearGradient id="gC17"><stop offset="0.0000" stop-color="#abefff"/><stop offset="0.0278" stop-color="#b1efff"/><stop offset="0.0556" stop-color="#b6efff"/><stop offset="0.0833" stop-color="#bbefff"/><stop offset="0.1111" stop-color="#c1efff"/><stop offset="0.1389" stop-color="#c6efff"/><stop offset="0.1667" stop-color="#caefff"/><stop offset="0.1944" stop-color="#cfefff"/><stop offset="0.2222" stop-color="#d4eeff"/><stop offset="0.2500" stop-color="#d8eeff"/><stop offset="0.2778" stop-color="#ddeeff"/><stop offset="0.3056" stop-color="#e1eeff"/><stop offset="0.3333" stop-color="#e6eeff"/><stop offset="0.3611" stop-color="#eaeeff"/><stop offset="0.3889" stop-color="#eeeeff"/><stop offset="0.4167" stop-color="#f2eeff"/><stop offset="0.4444" stop-color="#f7eeff"/><stop offset="0.4722" stop-color="#fbeeff"/><stop offset="0.5000" stop-color="#ffeeff"/><stop offset="0.5278" stop-color="#ffeafb"/><stop offset="0.5556" stop-color="#ffe6f7"/><stop offset="0.5833" stop-color="#ffe2f3"/><stop offset="0.6111" stop-color="#ffdef0"/><stop offset="0.6389" stop-color="#ffdaec"/><stop offset="0.6667" stop-color="#ffd6e8"/><stop offset="0.6944" stop-color="#ffd2e4"/><stop offset="0.7222" stop-color="#ffcee0"/><stop offset="0.7500" stop-color="#ffcadd"/><stop offset="0.7778" stop-color="#ffc6d9"/><stop offset="0.8056" stop-color="#ffc3d5"/><stop offset="0.8333" stop-color="#ffbfd2"/><stop offset="0.8611" stop-color="#ffbbce"/><stop offset="0.8889" stop-color="#ffb7ca"/><stop offset="0.9167" stop-color="#ffb3c7"/><stop offset="0.9444" stop-color="#ffb0c3"/><stop offset="0.9722" stop-color="#ffacc0"/><stop offset="1.0000" stop-color="#ffa8bc"/></linearGradient><linearGradient id="gC18"><stop offset="0.0000" stop-color="#acebff"/><stop offset="0.0278" stop-color="#b1ebff"/><stop offset="0.0556" stop-color="#b7ebff"/><stop offset="0.0833" stop-color="#bcebff"/><stop offset="0.1111" stop-color="#c1ebff"/><stop offset="0.1389" stop-color="#c6ebff"/><stop offset="0.1667" stop-color="#caebff"/><stop offset="0.1944" stop-color="#cfebff"/><stop offset="0.2222" stop-color="#d4ebff"/><stop offset="0.2500" stop-color="#d8ebff"/><stop offset="0.2778" stop-color="#ddebff"/><stop offset="0.3056" stop-color="#e1ebff"/><stop offset="0.3333" stop-color="#e6eaff"/><stop offset="0.3611" stop-color="#eaeaff"/><stop offset="0.3889" stop-color="#eeeaff"/><stop offset="0.4167" stop-color="#f2eaff"/><stop offset="0.4444" stop-color="#f6eaff"/><stop offset="0.4722" stop-color="#faeaff"/><stop offset="0.5000" stop-color="#feeaff"/><stop offset="0.5278" stop-color="#ffe6fc"/><stop offset="0.5556" stop-color="#ffe2f8"/><stop offset="0.5833" stop-color="#ffdef4"/><stop offset="0.6111" stop-color="#ffdaf0"/><stop offset="0.6389" stop-color="#ffd6ec"/><stop offset="0.6667" stop-color="#ffd2e8"/><stop offset="0.6944" stop-color="#ffcee5"/><stop offset="0.7222" stop-color="#ffcbe1"/><stop offset="0.7500" stop-color="#ffc7dd"/><stop offset="0.7778" stop-color="#ffc3da"/><stop offset="0.8056" stop-color="#ffbfd6"/><stop offset="0.8333" stop-color="#ffbbd2"/><stop offset="0.8611" stop-color="#ffb7cf"/><stop offset="0.8889" stop-color="#ffb3cb"/><stop offset="0.9167" stop-color="#ffb0c7"/><stop offset="0.9444" stop-color="#ffacc4"/><stop offset="0.9722" stop-color="#ffa8c0"/><stop offset="1.0000" stop-color="#ffa4bd"/></linearGradient><linearGradient id="gC19"><stop offset="0.0000" stop-color="#ace8ff"/><stop offset="0.0278" stop-color="#b1e8ff"/><stop offset="0.0556" stop-color="#b7e8ff"/><stop offset="0.0833" stop-color="#bce8ff"/><stop offset="0.1111" stop-color="#c1e8ff"/><stop offset="0.1389" stop-color="#c6e7ff"/><stop offset="0.1667" stop-color="#cbe7ff"/><stop offset="0.1944" stop-color="#cfe7ff"/><stop offset="0.2222" stop-color="#d4e7ff"/><stop offset="0.2500" stop-color="#d8e7ff"/><stop offset="0.2778" stop-color="#dde7ff"/><stop offset="0.3056" stop-color="#e1e7ff"/><stop offset="0.3333" stop-color="#e6e7ff"/><stop offset="0.3611" stop-color="#eae7ff"/><stop offset="0.3889" stop-color="#eee6ff"/><stop offset="0.4167" stop-color="#f2e6ff"/><stop offset="0.4444" stop-color="#f6e6ff"/><stop offset="0.4722" stop-color="#fae6ff"/><stop offset="0.5000" stop-color="#fee6ff"/><stop offset="0.5278" stop-color="#ffe3fc"/><stop offset="0.5556" stop-color="#ffdff8"/><stop offset="0.5833" stop-color="#ffdbf4"/><stop offset="0.6111" stop-color="#ffd7f0"/><stop offset="0.6389" stop-color="#ffd3ec"/><stop offset="0.6667" stop-color="#ffcfe9"/><stop offset="0.6944" stop-color="#ffcbe5"/><stop offset="0.7222" stop-color="#ffc7e1"/><stop offset="0.7500" stop-color="#ffc3de"/><stop offset="0.7778" stop-color="#ffbfda"/><stop offset="0.8056" stop-color="#ffbbd6"/><stop offset="0.8333" stop-color="#ffb7d3"/><stop offset="0.8611" stop-color="#ffb4cf"/><stop offset="0.8889" stop-color="#ffb0cc"/><stop offset="0.9167" stop-color="#ffacc8"/><stop offset="0.9444" stop-color="#ffa8c5"/><stop offset="0.9722" stop-color="#ffa4c1"/><stop offset="1.0000" stop-color="#ffa0bd"/></linearGradient><linearGradient id="gC20"><stop offset="0.0000" stop-color="#ace4ff"/><stop offset="0.0278" stop-color="#b2e4ff"/><stop offset="0.0556" stop-color="#b7e4ff"/><stop offset="0.0833" stop-color="#bce4ff"/><stop offset="0.1111" stop-color="#c1e4ff"/><stop offset="0.1389" stop-color="#c6e4ff"/><stop offset="0.1667" stop-color="#cbe4ff"/><stop offset="0.1944" stop-color="#cfe4ff"/><stop offset="0.2222" stop-color="#d4e3ff"/><stop offset="0.2500" stop-color="#d8e3ff"/><stop offset="0.2778" stop-color="#dde3ff"/><stop offset="0.3056" stop-color="#e1e3ff"/><stop offset="0.3333" stop-color="#e5e3ff"/><stop offset="0.3611" stop-color="#eae3ff"/><stop offset="0.3889" stop-color="#eee3ff"/><stop offset="0.4167" stop-color="#f2e3ff"/><stop offset="0.4444" stop-color="#f6e2ff"/><stop offset="0.4722" stop-color="#fae2ff"/><stop offset="0.5000" stop-color="#fee2ff"/><stop offset="0.5278" stop-color="#ffdffc"/><stop offset="0.5556" stop-color="#ffdbf8"/><stop offset="0.5833" stop-color="#ffd7f4"/><stop offset="0.6111" stop-color="#ffd3f1"/><stop offset="0.6389" stop-color="#ffcfed"/><stop offset="0.6667" stop-color="#ffcbe9"/><stop offset="0.6944" stop-color="#ffc7e5"/><stop offset="0.7222" stop-color="#ffc3e2"/><stop offset="0.7500" stop-color="#ffbfde"/><stop offset="0.7778" stop-color="#ffbbda"/><stop offset="0.8056" stop-color="#ffb8d7"/><stop offset="0.8333" stop-color="#ffb4d3"/><stop offset="0.8611" stop-color="#ffb0d0"/><stop offset="0.8889" stop-color="#ffaccc"/><stop offset="0.9167" stop-color="#ffa8c9"/><stop offset="0.9444" stop-color="#ffa4c5"/><stop offset="0.9722" stop-color="#ffa0c2"/><stop offset="1.0000" stop-color="#ff9cbe"/></linearGradient><linearGradient id="gC21"><stop offset="0.0000" stop-color="#ade1ff"/><stop offset="0.0278" stop-color="#b2e1ff"/><stop offset="0.0556" stop-color="#b7e1ff"/><stop offset="0.0833" stop-color="#bce0ff"/><stop offset="0.1111" stop-color="#c1e0ff"/><stop offset="0.1389" stop-color="#c6e0ff"/><stop offset="0.1667" stop-color="#cbe0ff"/><stop offset="0.1944" stop-color="#cfe0ff"/><stop offset="0.2222" stop-color="#d4e0ff"/><stop offset="0.2500" stop-color="#d8e0ff"/><stop offset="0.2778" stop-color="#dddfff"/><stop offset="0.3056" stop-color="#e1dfff"/><stop offset="0.3333" stop-color="#e5dfff"/><stop offset="0.3611" stop-color="#eadfff"/><stop offset="0.3889" stop-color="#eedfff"/><stop offset="0.4167" stop-color="#f2dfff"/><stop offset="0.4444" stop-color="#f6dfff"/><stop offset="0.4722" stop-color="#fadeff"/><stop offset="0.5000" stop-color="#fedeff"/><stop offset="0.5278" stop-color="#ffdcfc"/><stop offset="0.5556" stop-color="#ffd7f9"/><stop offset="0.5833" stop-color="#ffd3f5"/><stop offset="0.6111" stop-color="#ffcff1"/><stop offset="0.6389" stop-color="#ffcbed"/><stop offset="0.6667" stop-color="#ffc7ea"/><stop offset="0.6944" stop-color="#ffc4e6"/><stop offset="0.7222" stop-color="#ffc0e2"/><stop offset="0.7500" stop-color="#ffbcdf"/><stop offset="0.7778" stop-color="#ffb8db"/><stop offset="0.8056" stop-color="#ffb4d7"/><stop offset="0.8333" stop-color="#ffb0d4"/><stop offset="0.8611" stop-color="#ffacd0"/><stop offset="0.8889" stop-color="#ffa8cd"/><stop offset="0.9167" stop-color="#ffa4c9"/><stop offset="0.9444" stop-color="#ffa0c6"/><stop offset="0.9722" stop-color="#ff9cc2"/><stop offset="1.0000" stop-color="#ff98bf"/></linearGradient><linearGradient id="gC22"><stop offset="0.0000" stop-color="#adddff"/><stop offset="0.0278" stop-color="#b2ddff"/><stop offset="0.0556" stop-color="#b7ddff"/><stop offset="0.0833" stop-color="#bcddff"/><stop offset="0.1111" stop-color="#c1ddff"/><stop offset="0.1389" stop-color="#c6dcff"/><stop offset="0.1667" stop-color="#cbdcff"/><stop offset="0.1944" stop-color="#cfdcff"/><stop offset="0.2222" stop-color="#d4dcff"/><stop offset="0.2500" stop-color="#d8dcff"/><stop offset="0.2778" stop-color="#dddcff"/><stop offset="0.3056" stop-color="#e1dcff"/><stop offset="0.3333" stop-color="#e5dbff"/><stop offset="0.3611" stop-color="#e9dbff"/><stop offset="0.3889" stop-color="#eddbff"/><stop offset="0.4167" stop-color="#f2dbff"/><stop offset="0.4444" stop-color="#f6dbff"/><stop offset="0.4722" stop-color="#fadbff"/><stop offset="0.5000" stop-color="#fddaff"/><stop offset="0.5278" stop-color="#ffd8fd"/><stop offset="0.5556" stop-color="#ffd4f9"/><stop offset="0.5833" stop-color="#ffd0f5"/><stop offset="0.6111" stop-color="#ffccf1"/><stop offset="0.6389" stop-color="#ffc8ee"/><stop offset="0.6667" stop-color="#ffc4ea"/><stop offset="0.6944" stop-color="#ffc0e6"/><stop offset="0.7222" stop-color="#ffbce3"/><stop offset="0.7500" stop-color="#ffb8df"/><stop offset="0.7778" stop-color="#ffb4db"/><stop offset="0.8056" stop-color="#ffb0d8"/><stop offset="0.8333" stop-color="#ffacd4"/><stop offset="0.8611" stop-color="#ffa8d1"/><stop offset="0.8889" stop-color="#ffa4cd"/><stop offset="0.9167" stop-color="#ffa0ca"/><stop offset="0.9444" stop-color="#ff9cc6"/><stop offset="0.9722" stop-color="#ff98c3"/><stop offset="1.0000" stop-color="#ff94bf"/></linearGradient><linearGradient id="gC23"><stop offset="0.0000" stop-color="#addaff"/><stop offset="0.0278" stop-color="#b3d9ff"/><stop offset="0.0556" stop-color="#b8d9ff"/><stop offset="0.0833" stop-color="#bdd9ff"/><stop offset="0.1111" stop-color="#c1d9ff"/><stop offset="0.1389" stop-color="#c6d9ff"/><stop offset="0.1667" stop-color="#cbd9ff"/><stop offset="0.1944" stop-color="#cfd8ff"/><stop offset="0.2222" stop-color="#d4d8ff"/><stop offset="0.2500" stop-color="#d8d8ff"/><stop offset="0.2778" stop-color="#ddd8ff"/><stop offset="0.3056" stop-color="#e1d8ff"/><stop offset="0.3333" stop-color="#e5d8ff"/><stop offset="0.3611" stop-color="#e9d7ff"/><stop offset="0.3889" stop-color="#edd7ff"/><stop offset="0.4167" stop-color="#f1d7ff"/><stop offset="0.4444" stop-color="#f5d7ff"/><stop offset="0.4722" stop-color="#f9d7ff"/><stop offset="0.5000" stop-color="#fdd6ff"/><stop offset="0.5278" stop-color="#ffd4fd"/><stop offset="0.5556" stop-color="#ffd0f9"/><stop offset="0.5833" stop-color="#ffccf5"/><stop offset="0.6111" stop-color="#ffc8f2"/><stop offset="0.6389" stop-color="#ffc4ee"/><stop offset="0.6667" stop-color="#ffc0ea"/><stop offset="0.6944" stop-color="#ffbce7"/><stop offset="0.7222" stop-color="#ffb8e3"/><stop offset="0.7500" stop-color="#ffb4df"/><stop offset="0.7778" stop-color="#ffb0dc"/><stop offset="0.8056" stop-color="#ffacd8"/><stop offset="0.8333" stop-color="#ffa8d5"/><stop offset="0.8611" stop-color="#ffa4d1"/><stop offset="0.8889" stop-color="#ffa0ce"/><stop offset="0.9167" stop-color="#ff9cca"/><stop offset="0.9444" stop-color="#ff98c7"/><stop offset="0.9722" stop-color="#ff94c3"/><stop offset="1.0000" stop-color="#ff8fc0"/></linearGradient><linearGradient id="gC24"><stop offset="0.0000" stop-color="#aed6ff"/><stop offset="0.0278" stop-color="#b3d6ff"/><stop offset="0.0556" stop-color="#b8d5ff"/><stop offset="0.0833" stop-color="#bdd5ff"/><stop offset="0.1111" stop-color="#c2d5ff"/><stop offset="0.1389" stop-color="#c6d5ff"/><stop offset="0.1667" stop-color="#cbd5ff"/><stop offset="0.1944" stop-color="#cfd5ff"/><stop offset="0.2222" stop-color="#d4d4ff"/><stop offset="0.2500" stop-color="#d8d4ff"/><stop offset="0.2778" stop-color="#ddd4ff"/><stop offset="0.3056" stop-color="#e1d4ff"/><stop offset="0.3333" stop-color="#e5d4ff"/><stop offset="0.3611" stop-color="#e9d3ff"/><stop offset="0.3889" stop-color="#edd3ff"/><stop offset="0.4167" stop-color="#f1d3ff"/><stop offset="0.4444" stop-color="#f5d3ff"/><stop offset="0.4722" stop-color="#f9d3ff"/><stop offset="0.5000" stop-color="#fdd2ff"/><stop offset="0.5278" stop-color="#ffd0fd"/><stop offset="0.5556" stop-color="#ffccf9"/><stop offset="0.5833" stop-color="#ffc8f6"/><stop offset="0.6111" stop-color="#ffc4f2"/><stop offset="0.6389" stop-color="#ffc0ee"/><stop offset="0.6667" stop-color="#ffbceb"/><stop offset="0.6944" stop-color="#ffb8e7"/><stop offset="0.7222" stop-color="#ffb4e3"/><stop offset="0.7500" stop-color="#ffb0e0"/><stop offset="0.7778" stop-color="#ffacdc"/><stop offset="0.8056" stop-color="#ffa8d9"/><stop offset="0.8333" stop-color="#ffa4d5"/><stop offset="0.8611" stop-color="#ffa0d2"/><stop offset="0.8889" stop-color="#ff9cce"/><stop offset="0.9167" stop-color="#ff98cb"/><stop offset="0.9444" stop-color="#ff93c7"/><stop offset="0.9722" stop-color="#ff8fc4"/><stop offset="1.0000" stop-color="#ff8bc1"/></linearGradient><linearGradient id="gC25"><stop offset="0.0000" stop-color="#aed2ff"/><stop offset="0.0278" stop-color="#b3d2ff"/><stop offset="0.0556" stop-color="#b8d2ff"/><stop offset="0.0833" stop-color="#bdd2ff"/><stop offset="0.1111" stop-color="#c2d1ff"/><stop offset="0.1389" stop-color="#c6d1ff"/><stop offset="0.1667" stop-color="#cbd1ff"/><stop offset="0.1944" stop-color="#d0d1ff"/><stop offset="0.2222" stop-color="#d4d1ff"/><stop offset="0.2500" stop-color="#d8d0ff"/><stop offset="0.2778" stop-color="#ddd0ff"/><stop offset="0.3056" stop-color="#e1d0ff"/><stop offset="0.3333" stop-color="#e5d0ff"/><stop offset="0.3611" stop-color="#e9d0ff"/><stop offset="0.3889" stop-color="#edcfff"/><stop offset="0.4167" stop-color="#f1cfff"/><stop offset="0.4444" stop-color="#f5cfff"/><stop offset="0.4722" stop-color="#f9cfff"/><stop offset="0.5000" stop-color="#fdceff"/><stop offset="0.5278" stop-color="#ffcdfd"/><stop offset="0.5556" stop-color="#ffc9fa"/><stop offset="0.5833" stop-color="#ffc4f6"/><stop offset="0.6111" stop-color="#ffc0f2"/><stop offset="0.6389" stop-color="#ffbcef"/><stop offset="0.6667" stop-color="#ffb8eb"/><stop offset="0.6944" stop-color="#ffb4e7"/><stop offset="0.7222" stop-color="#ffb0e4"/><stop offset="0.7500" stop-color="#fface0"/><stop offset="0.7778" stop-color="#ffa8dd"/><stop offset="0.8056" stop-color="#ffa4d9"/><stop offset="0.8333" stop-color="#ffa0d6"/><stop offset="0.8611" stop-color="#ff9cd2"/><stop offset="0.8889" stop-color="#ff97cf"/><stop offset="0.9167" stop-color="#ff93cb"/><stop offset="0.9444" stop-color="#ff8fc8"/><stop offset="0.9722" stop-color="#ff8bc5"/><stop offset="1.0000" stop-color="#ff86c1"/></linearGradient><filter id="fBlur" x="-0.2" y="-0.2" width="1.4" height="1.4"><feGaussianBlur stdDeviation="0 5"/></filter><clipPath id="cCIE"><rect x="513" y="990" width="324.3" height="233.6"/></clipPath><linearGradient id="gBar" x1="0" y1="0" x2="0" y2="1"><stop offset="0" stop-color="#4a4a4a"/><stop offset="1" stop-color="#222222"/></linearGradient><linearGradient id="gSw" x1="0" y1="0" x2="0" y2="1"><stop offset="0" stop-color="#a8a8a8"/><stop offset="0.6" stop-color="#8a8a8a"/><stop offset="1" stop-color="#5c5c5c"/></linearGradient><linearGradient id="gTr" x1="0" y1="0" x2="0" y2="1"><stop offset="0" stop-color="#b4b4b4"/><stop offset="1" stop-color="#6e6e6e"/></linearGradient><linearGradient id="gTrC" x1="0" y1="0" x2="0" y2="1"><stop offset="0" stop-color="#7e7e7e"/><stop offset="1" stop-color="#b4b4b4"/></linearGradient><linearGradient id="gStopBox" x1="0" y1="0" x2="0" y2="1"><stop offset="0" stop-color="#cfcfcf"/><stop offset="0.5" stop-color="#bcbcbc"/><stop offset="0.5" stop-color="#9c9c9c"/><stop offset="1" stop-color="#b0b0b0"/></linearGradient><linearGradient id="gStopSq" x1="0" y1="0" x2="0" y2="1"><stop offset="0" stop-color="#1e1e1e"/><stop offset="0.5" stop-color="#1e1e1e"/><stop offset="0.5" stop-color="#000"/><stop offset="1" stop-color="#000"/></linearGradient><linearGradient id="gRE" x1="0" y1="0" x2="1" y2="0"><stop offset="0" stop-color="#000" stop-opacity="0"/><stop offset="1" stop-color="#000" stop-opacity="0.75"/></linearGradient></defs><rect x="0" y="0" width="2293" height="1392" fill="#333333"/>
<rect x="0" y="0" width="2293" height="31" fill="#eef4f8"/>
<rect x="0" y="0" width="2293" height="1" fill="#6b6b6b"/>
<rect x="0" y="0" width="1" height="31" fill="#6b6b6b"/>
<g transform="translate(17,15)"><path d="M0,-8 L4,-4 L0,0 L-4,-4Z" fill="#ffc107"/><path d="M-8,0 L-4,-4 L0,0 L-4,4Z" fill="#29c5f6"/><path d="M8,0 L4,-4 L0,0 L4,4Z" fill="#22cc22"/><path d="M0,8 L4,4 L0,0 L-4,4Z" fill="#ff1f5a"/></g>
<text x="31.00" y="19.60" font-family="Liberation Sans" font-size="12.75" font-weight="normal" fill="#111" textLength="393.01" lengthAdjust="spacingAndGlyphs" xml:space="preserve" >Calman 2025 Calman Ultimate for Business 357 Days Remaining  - Untitled</text>
<rect x="2173" y="14.5" width="10" height="1.3" fill="#111"/>
<rect x="2218.5" y="10.5" width="9.5" height="9.5" rx="1.5" fill="none" stroke="#111" stroke-width="1.2"/>
<path d="M2264,10 L2274,20 M2274,10 L2264,20" stroke="#111" stroke-width="1.2"/>
<rect x="0" y="31" width="2293" height="66" fill="#222222"/>
<path d="M2,31 H183 V56 Q183,60.5 179,60.5 H6 Q2,60.5 2,56 Z" fill="url(#gRed)"/>
<path d="M2,60 H183" stroke="#9a9a9a" stroke-width="1" opacity="0.6"/>
<g transform="translate(35.4,45.3)"><path d="M0,-10.6 L10.6,0 L0,10.6 L-10.6,0Z" fill="none" stroke="#fff" stroke-width="2.4" stroke-linejoin="round"/><path d="M0,-8 L3.6,-4.4 L0,-0.8 L-3.6,-4.4Z M-4.4,-3.6 L-0.8,0 L-4.4,3.6 L-8,0Z M4.4,-3.6 L8,0 L4.4,3.6 L0.8,0Z M0,0.8 L3.6,4.4 L0,8 L-3.6,4.4Z" fill="#fff"/></g>
<g fill="none" stroke="#fff" stroke-width="2.6"><path d="M60.45,41.58 A5.05,5.05 0 1 0 60.45,49.32"/><circle cx="69.4" cy="45.45" r="5.05"/><path d="M74.45,39.6 V51.8"/><path d="M81,33.4 V51.8"/><path d="M85.2,39.6 V51.8 M85.2,45.2 A5.15,5.15 0 0 1 95.5,45.2 V51.8 M95.5,45.2 A5.15,5.15 0 0 1 105.8,45.2 V51.8"/><circle cx="115.25" cy="45.45" r="5.05"/><path d="M120.3,39.6 V51.8"/><path d="M124.3,39.6 V51.8 M124.3,45.2 A5.2,5.2 0 0 1 134.7,45.2 V51.8"/></g>
<circle cx="166.6" cy="45" r="9.5" fill="url(#gRedBtn)"/>
<path d="M162,43.8 H171.5 L166.75,49 Z" fill="#fff"/>
<rect x="191" y="43.5" width="2102" height="5" fill="url(#gRain)"/>
<rect x="-2" y="66" width="30" height="28" rx="3" fill="url(#gBtn)" stroke="#bdbdbd" stroke-width="1"/>
<circle cx="14" cy="80" r="9.5" fill="url(#gCirc)"/>
<path d="M11.3,75.8 L16.3,80.2 L11.3,84.6Z" fill="#fff"/>
<path d="M30.5,97 V70 Q30.5,66.5 34,66.5 H118.5 Q122,66.5 122,70 V97" fill="url(#gTab)" stroke="#6a6a6a" stroke-width="1"/>
<path d="M88.5,67 V97" stroke="#6a6a6a" stroke-width="1"/>
<text x="36.60" y="86.30" font-family="Liberation Sans" font-size="12.03" font-weight="normal" fill="#d8d8d8" textLength="45.80" lengthAdjust="spacingAndGlyphs" xml:space="preserve" >History 1</text>
<circle cx="104" cy="83" r="9" fill="#3a3a3a" opacity="0.8"/>
<path d="M104,79.5 V86.5 M100.5,83 H107.5" stroke="#777" stroke-width="1"/>
<path d="M1796.0,96 V70 Q1796.0,66 1800.0,66 H1938.5 Q1942.5,66 1942.5,70 V96 Z" fill="url(#gDev)"/><rect x="1796.0" y="67" width="5.5" height="29" fill="#22dd22"/>
<text x="1805.50" y="77.90" font-family="Liberation Sans" font-size="10.87" font-weight="normal" fill="#f0f0f0" textLength="64.50" lengthAdjust="spacingAndGlyphs" xml:space="preserve" >X-Rite i1Pro 3</text>
<text x="1805.50" y="91.60" font-family="Liberation Sans" font-size="10.87" font-weight="normal" fill="#f0f0f0" textLength="69.02" lengthAdjust="spacingAndGlyphs" xml:space="preserve" >Rear Projector</text>
<circle cx="1887.5" cy="81.0" r="9.5" fill="url(#gDrop)"/><path d="M1882.0,79.2 H1893.0 L1887.5,85.0 Z" fill="#fff"/>
<rect x="1906" y="69" width="1.5" height="27" fill="#4a4a4a"/>
<circle cx="1927.4" cy="81" r="12.8" fill="#0000ee" stroke="#e8e8ff" stroke-width="1"/>
<text x="1919.90" y="84.80" font-family="Liberation Sans" font-size="10.43" font-weight="normal" fill="#fff" textLength="14.99" lengthAdjust="spacingAndGlyphs" xml:space="preserve" >340</text>
<path d="M1948.4,96 V70 Q1948.4,66 1952.4,66 H2074.6 Q2078.6,66 2078.6,70 V96 Z" fill="url(#gDev)"/><rect x="1948.4" y="67" width="5.5" height="29" fill="#22dd22"/>
<text x="1957.80" y="77.60" font-family="Liberation Sans" font-size="11.01" font-weight="normal" fill="#f0f0f0" textLength="63.81" lengthAdjust="spacingAndGlyphs" xml:space="preserve" >Mobile Forge</text>
<circle cx="2062.0" cy="81.0" r="9.5" fill="url(#gDrop)"/><path d="M2056.5,79.2 H2067.5 L2062.0,85.0 Z" fill="#fff"/>
<path d="M2085.0,96 V70 Q2085.0,66 2089.0,66 H2223.8 Q2227.8,66 2227.8,70 V96 Z" fill="url(#gDev)"/><rect x="2085.0" y="67" width="5.5" height="29" fill="#e8e800"/>
<text x="2094.00" y="77.80" font-family="Liberation Sans" font-size="11.01" font-weight="normal" fill="#f0f0f0" textLength="105.00" lengthAdjust="spacingAndGlyphs" xml:space="preserve" >Direct Display Control</text>
<circle cx="2212.0" cy="81.0" r="9.5" fill="url(#gDrop)"/><path d="M2206.5,79.2 H2217.5 L2212.0,85.0 Z" fill="#fff"/>
<rect x="2231" y="66" width="33" height="27.5" rx="3" fill="url(#gBtn2)" stroke="#b0b0b0" stroke-width="1"/>
<circle cx="2247.5" cy="80" r="9.5" fill="url(#gDrop)"/>
<polygon points="2253.55,78.65 2255.05,79.09 2255.05,80.91 2253.55,81.35 2252.74,83.32 2253.48,84.69 2252.19,85.98 2250.82,85.24 2248.85,86.05 2248.41,87.55 2246.59,87.55 2246.15,86.05 2244.18,85.24 2242.81,85.98 2241.52,84.69 2242.26,83.32 2241.45,81.35 2239.95,80.91 2239.95,79.09 2241.45,78.65 2242.26,76.68 2241.52,75.31 2242.81,74.02 2244.18,74.76 2246.15,73.95 2246.59,72.45 2248.41,72.45 2248.85,73.95 2250.82,74.76 2252.19,74.02 2253.48,75.31 2252.74,76.68" fill="#c8c8c8"/>
<circle cx="2247.5" cy="80" r="2.8" fill="#666"/>
<rect x="2265" y="66" width="32" height="27.5" rx="3" fill="url(#gBtn2)" stroke="#b0b0b0" stroke-width="1"/>
<circle cx="2279" cy="80" r="9.5" fill="url(#gDrop)"/>
<path d="M2282,75.5 L2277,80 L2282,84.5Z" fill="#fff"/>
<rect x="0" y="97" width="2293" height="668" fill="#333333"/>
<text x="36.10" y="232.30" font-family="Liberation Sans" font-size="56.96" font-weight="normal" fill="#eeeeee" textLength="226.48" lengthAdjust="spacingAndGlyphs" xml:space="preserve" >Grayscale</text>
<text x="205.60" y="301.00" font-family="Liberation Sans" font-size="19.86" font-weight="normal" fill="#dedede" textLength="107.18" lengthAdjust="spacingAndGlyphs" xml:space="preserve" >DeltaE 2000</text>
<rect x="63" y="308" width="426" height="343" fill="#222222"/>
<rect x="118.6" y="309" width="2" height="342" fill="#999999"/>
<rect x="175.2" y="309" width="2" height="342" fill="#999999"/>
<rect x="231.7" y="309" width="2" height="342" fill="#999999"/>
<rect x="288.3" y="309" width="2" height="342" fill="#999999"/>
<rect x="344.9" y="309" width="2" height="342" fill="#999999"/>
<rect x="401.5" y="309" width="2" height="342" fill="#999999"/>
<rect x="458.1" y="309" width="2" height="342" fill="#999999"/>
<path d="M63,308 H489 V651" fill="none" stroke="#999999" stroke-width="2"/>
<rect x="62" y="308" width="2" height="344" fill="#999999"/>
<rect x="62" y="650" width="428" height="2" fill="#999999"/>
<rect x="64" y="622.3" width="38.1" height="23.5" fill="#000"/>
<rect x="64" y="624.3" width="36.1" height="20" fill="url(#gBar0)"/>
<rect x="64" y="591.1" width="63.0" height="23.5" fill="#000"/>
<rect x="64" y="593.1" width="61.0" height="20" fill="url(#gBar1)"/>
<rect x="64" y="559.9" width="50.2" height="23.5" fill="#000"/>
<rect x="64" y="561.9" width="48.2" height="20" fill="url(#gBar2)"/>
<rect x="64" y="528.7" width="42.4" height="23.5" fill="#000"/>
<rect x="64" y="530.7" width="40.4" height="20" fill="url(#gBar3)"/>
<rect x="64" y="497.5" width="51.7" height="23.5" fill="#000"/>
<rect x="64" y="499.5" width="49.7" height="20" fill="url(#gBar4)"/>
<rect x="64" y="466.3" width="53.6" height="23.5" fill="#000"/>
<rect x="64" y="468.3" width="51.6" height="20" fill="url(#gBar5)"/>
<rect x="64" y="435.1" width="62.2" height="23.5" fill="#000"/>
<rect x="64" y="437.1" width="60.2" height="20" fill="url(#gBar6)"/>
<rect x="64" y="403.9" width="70.9" height="23.5" fill="#000"/>
<rect x="64" y="405.9" width="68.9" height="20" fill="url(#gBar7)"/>
<rect x="64" y="372.7" width="78.3" height="23.5" fill="#000"/>
<rect x="64" y="374.7" width="76.3" height="20" fill="url(#gBar8)"/>
<rect x="64" y="341.5" width="81.0" height="23.5" fill="#000"/>
<rect x="64" y="343.5" width="79.0" height="20" fill="url(#gBar9)"/>
<rect x="64" y="310.3" width="88.6" height="23.5" fill="#000"/>
<rect x="64" y="312.3" width="86.6" height="20" fill="url(#gBar10)"/>
<rect x="90.1" y="309" width="1.7" height="342" fill="#008200"/>
<rect x="146.5" y="309" width="2" height="342" fill="#ffff00"/>
<rect x="346.5" y="309" width="2" height="342" fill="#ff0000"/>
<rect x="54" y="307.0" width="8" height="2" fill="#dddddd"/>
<rect x="54" y="338.2" width="8" height="2" fill="#dddddd"/>
<rect x="54" y="369.4" width="8" height="2" fill="#dddddd"/>
<rect x="54" y="400.6" width="8" height="2" fill="#dddddd"/>
<rect x="54" y="431.8" width="8" height="2" fill="#dddddd"/>
<rect x="54" y="463.0" width="8" height="2" fill="#dddddd"/>
<rect x="54" y="494.2" width="8" height="2" fill="#dddddd"/>
<rect x="54" y="525.4" width="8" height="2" fill="#dddddd"/>
<rect x="54" y="556.6" width="8" height="2" fill="#dddddd"/>
<rect x="54" y="587.8" width="8" height="2" fill="#dddddd"/>
<rect x="54" y="619.0" width="8" height="2" fill="#dddddd"/>
<rect x="54" y="650.2" width="8" height="2" fill="#dddddd"/>
<text x="49.62" y="643.80" font-family="Liberation Sans" font-size="20.00" font-weight="normal" fill="#dedede" textLength="10.90" lengthAdjust="spacingAndGlyphs" xml:space="preserve" >0</text>
<text x="38.74" y="612.60" font-family="Liberation Sans" font-size="20.00" font-weight="normal" fill="#dedede" textLength="21.80" lengthAdjust="spacingAndGlyphs" xml:space="preserve" >10</text>
<text x="38.74" y="581.40" font-family="Liberation Sans" font-size="20.00" font-weight="normal" fill="#dedede" textLength="21.80" lengthAdjust="spacingAndGlyphs" xml:space="preserve" >20</text>
<text x="38.74" y="550.20" font-family="Liberation Sans" font-size="20.00" font-weight="normal" fill="#dedede" textLength="21.80" lengthAdjust="spacingAndGlyphs" xml:space="preserve" >30</text>
<text x="38.74" y="519.00" font-family="Liberation Sans" font-size="20.00" font-weight="normal" fill="#dedede" textLength="21.80" lengthAdjust="spacingAndGlyphs" xml:space="preserve" >40</text>
<text x="38.74" y="487.80" font-family="Liberation Sans" font-size="20.00" font-weight="normal" fill="#dedede" textLength="21.80" lengthAdjust="spacingAndGlyphs" xml:space="preserve" >50</text>
<text x="38.74" y="456.60" font-family="Liberation Sans" font-size="20.00" font-weight="normal" fill="#dedede" textLength="21.80" lengthAdjust="spacingAndGlyphs" xml:space="preserve" >60</text>
<text x="38.74" y="425.40" font-family="Liberation Sans" font-size="20.00" font-weight="normal" fill="#dedede" textLength="21.80" lengthAdjust="spacingAndGlyphs" xml:space="preserve" >70</text>
<text x="38.74" y="394.20" font-family="Liberation Sans" font-size="20.00" font-weight="normal" fill="#dedede" textLength="21.80" lengthAdjust="spacingAndGlyphs" xml:space="preserve" >80</text>
<text x="38.74" y="363.00" font-family="Liberation Sans" font-size="20.00" font-weight="normal" fill="#dedede" textLength="21.80" lengthAdjust="spacingAndGlyphs" xml:space="preserve" >90</text>
<text x="27.77" y="331.80" font-family="Liberation Sans" font-size="20.00" font-weight="normal" fill="#dedede" textLength="32.70" lengthAdjust="spacingAndGlyphs" xml:space="preserve" >100</text>
<rect x="62.0" y="652" width="2" height="7" fill="#dddddd"/>
<text x="57.91" y="680.50" font-family="Liberation Sans" font-size="19.71" font-weight="normal" fill="#dedede" textLength="10.19" lengthAdjust="spacingAndGlyphs" xml:space="preserve" >0</text>
<rect x="118.6" y="652" width="2" height="7" fill="#dddddd"/>
<text x="114.49" y="680.50" font-family="Liberation Sans" font-size="19.71" font-weight="normal" fill="#dedede" textLength="10.19" lengthAdjust="spacingAndGlyphs" xml:space="preserve" >2</text>
<rect x="175.2" y="652" width="2" height="7" fill="#dddddd"/>
<text x="171.07" y="680.50" font-family="Liberation Sans" font-size="19.71" font-weight="normal" fill="#dedede" textLength="10.19" lengthAdjust="spacingAndGlyphs" xml:space="preserve" >4</text>
<rect x="231.7" y="652" width="2" height="7" fill="#dddddd"/>
<text x="227.65" y="680.50" font-family="Liberation Sans" font-size="19.71" font-weight="normal" fill="#dedede" textLength="10.19" lengthAdjust="spacingAndGlyphs" xml:space="preserve" >6</text>
<rect x="288.3" y="652" width="2" height="7" fill="#dddddd"/>
<text x="284.23" y="680.50" font-family="Liberation Sans" font-size="19.71" font-weight="normal" fill="#dedede" textLength="10.19" lengthAdjust="spacingAndGlyphs" xml:space="preserve" >8</text>
<rect x="344.9" y="652" width="2" height="7" fill="#dddddd"/>
<text x="335.73" y="680.50" font-family="Liberation Sans" font-size="19.71" font-weight="normal" fill="#dedede" textLength="20.39" lengthAdjust="spacingAndGlyphs" xml:space="preserve" >10</text>
<rect x="401.5" y="652" width="2" height="7" fill="#dddddd"/>
<text x="392.31" y="680.50" font-family="Liberation Sans" font-size="19.71" font-weight="normal" fill="#dedede" textLength="20.39" lengthAdjust="spacingAndGlyphs" xml:space="preserve" >12</text>
<rect x="458.1" y="652" width="2" height="7" fill="#dddddd"/>
<text x="448.89" y="680.50" font-family="Liberation Sans" font-size="19.71" font-weight="normal" fill="#dedede" textLength="20.39" lengthAdjust="spacingAndGlyphs" xml:space="preserve" >14</text>
<text x="899.00" y="206.90" font-family="Liberation Sans" font-size="20.29" font-weight="normal" fill="#dedede" textLength="112.08" lengthAdjust="spacingAndGlyphs" xml:space="preserve" >RGB Balance</text>
<rect x="585" y="215" width="782" height="436" fill="#222222"/>
<rect x="585" y="595.9" width="782" height="2.2" fill="#999999"/>
<rect x="585" y="541.5" width="782" height="2.2" fill="#999999"/>
<rect x="585" y="487.0" width="782" height="2.2" fill="#999999"/>
<rect x="585" y="432.6" width="782" height="2.2" fill="#999999"/>
<rect x="585" y="378.2" width="782" height="2.2" fill="#999999"/>
<rect x="585" y="323.8" width="782" height="2.2" fill="#999999"/>
<rect x="585" y="269.3" width="782" height="2.2" fill="#999999"/>
<rect x="584" y="213" width="784" height="3.5" fill="#999999"/>
<rect x="584" y="213" width="2.2" height="440" fill="#999999"/>
<rect x="1365.8" y="213" width="2.2" height="440" fill="#999999"/>
<rect x="584" y="650" width="784" height="2.8" fill="#999999"/>
<rect x="576" y="650.4" width="8" height="2" fill="#dddddd"/>
<text x="553.76" y="658.64" font-family="Liberation Sans" font-size="20.58" font-weight="normal" fill="#dedede" textLength="21.29" lengthAdjust="spacingAndGlyphs" xml:space="preserve" >80</text>
<rect x="576" y="596.0" width="8" height="2" fill="#dddddd"/>
<text x="553.76" y="604.21" font-family="Liberation Sans" font-size="20.58" font-weight="normal" fill="#dedede" textLength="21.29" lengthAdjust="spacingAndGlyphs" xml:space="preserve" >85</text>
<rect x="576" y="541.6" width="8" height="2" fill="#dddddd"/>
<text x="553.76" y="549.78" font-family="Liberation Sans" font-size="20.58" font-weight="normal" fill="#dedede" textLength="21.29" lengthAdjust="spacingAndGlyphs" xml:space="preserve" >90</text>
<rect x="576" y="487.1" width="8" height="2" fill="#dddddd"/>
<text x="553.76" y="495.35" font-family="Liberation Sans" font-size="20.58" font-weight="normal" fill="#dedede" textLength="21.29" lengthAdjust="spacingAndGlyphs" xml:space="preserve" >95</text>
<rect x="576" y="432.7" width="8" height="2" fill="#dddddd"/>
<text x="543.04" y="440.92" font-family="Liberation Sans" font-size="20.58" font-weight="normal" fill="#dedede" textLength="31.93" lengthAdjust="spacingAndGlyphs" xml:space="preserve" >100</text>
<rect x="576" y="378.3" width="8" height="2" fill="#dddddd"/>
<text x="543.04" y="386.49" font-family="Liberation Sans" font-size="20.58" font-weight="normal" fill="#dedede" textLength="31.93" lengthAdjust="spacingAndGlyphs" xml:space="preserve" >105</text>
<rect x="576" y="323.9" width="8" height="2" fill="#dddddd"/>
<text x="544.47" y="332.06" font-family="Liberation Sans" font-size="20.58" font-weight="normal" fill="#dedede" textLength="30.51" lengthAdjust="spacingAndGlyphs" xml:space="preserve" >110</text>
<rect x="576" y="269.4" width="8" height="2" fill="#dddddd"/>
<text x="544.47" y="277.63" font-family="Liberation Sans" font-size="20.58" font-weight="normal" fill="#dedede" textLength="30.51" lengthAdjust="spacingAndGlyphs" xml:space="preserve" >115</text>
<rect x="576" y="215.0" width="8" height="2" fill="#dddddd"/>
<text x="543.04" y="223.20" font-family="Liberation Sans" font-size="20.58" font-weight="normal" fill="#dedede" textLength="31.93" lengthAdjust="spacingAndGlyphs" xml:space="preserve" >120</text>
<rect x="584.0" y="653" width="2" height="6" fill="#dddddd"/>
<text x="579.69" y="681.00" font-family="Liberation Sans" font-size="20.58" font-weight="normal" fill="#dedede" textLength="10.64" lengthAdjust="spacingAndGlyphs" xml:space="preserve" >0</text>
<rect x="662.2" y="653" width="2" height="6" fill="#dddddd"/>
<text x="652.58" y="681.00" font-family="Liberation Sans" font-size="20.58" font-weight="normal" fill="#dedede" textLength="21.29" lengthAdjust="spacingAndGlyphs" xml:space="preserve" >10</text>
<rect x="740.4" y="653" width="2" height="6" fill="#dddddd"/>
<text x="730.78" y="681.00" font-family="Liberation Sans" font-size="20.58" font-weight="normal" fill="#dedede" textLength="21.29" lengthAdjust="spacingAndGlyphs" xml:space="preserve" >20</text>
<rect x="818.6" y="653" width="2" height="6" fill="#dddddd"/>
<text x="808.98" y="681.00" font-family="Liberation Sans" font-size="20.58" font-weight="normal" fill="#dedede" textLength="21.29" lengthAdjust="spacingAndGlyphs" xml:space="preserve" >30</text>
<rect x="896.8" y="653" width="2" height="6" fill="#dddddd"/>
<text x="887.18" y="681.00" font-family="Liberation Sans" font-size="20.58" font-weight="normal" fill="#dedede" textLength="21.29" lengthAdjust="spacingAndGlyphs" xml:space="preserve" >40</text>
<rect x="975.0" y="653" width="2" height="6" fill="#dddddd"/>
<text x="965.38" y="681.00" font-family="Liberation Sans" font-size="20.58" font-weight="normal" fill="#dedede" textLength="21.29" lengthAdjust="spacingAndGlyphs" xml:space="preserve" >50</text>
<rect x="1053.2" y="653" width="2" height="6" fill="#dddddd"/>
<text x="1043.58" y="681.00" font-family="Liberation Sans" font-size="20.58" font-weight="normal" fill="#dedede" textLength="21.29" lengthAdjust="spacingAndGlyphs" xml:space="preserve" >60</text>
<rect x="1131.4" y="653" width="2" height="6" fill="#dddddd"/>
<text x="1121.78" y="681.00" font-family="Liberation Sans" font-size="20.58" font-weight="normal" fill="#dedede" textLength="21.29" lengthAdjust="spacingAndGlyphs" xml:space="preserve" >70</text>
<rect x="1209.6" y="653" width="2" height="6" fill="#dddddd"/>
<text x="1199.98" y="681.00" font-family="Liberation Sans" font-size="20.58" font-weight="normal" fill="#dedede" textLength="21.29" lengthAdjust="spacingAndGlyphs" xml:space="preserve" >80</text>
<rect x="1287.8" y="653" width="2" height="6" fill="#dddddd"/>
<text x="1278.18" y="681.00" font-family="Liberation Sans" font-size="20.58" font-weight="normal" fill="#dedede" textLength="21.29" lengthAdjust="spacingAndGlyphs" xml:space="preserve" >90</text>
<rect x="1366.0" y="653" width="2" height="6" fill="#dddddd"/>
<text x="1351.02" y="681.00" font-family="Liberation Sans" font-size="20.58" font-weight="normal" fill="#dedede" textLength="31.93" lengthAdjust="spacingAndGlyphs" xml:space="preserve" >100</text>
<clipPath id="cRGB"><rect x="580" y="216" width="786" height="434"/></clipPath>
<g clip-path="url(#cRGB)" fill="none" stroke-width="4.5" stroke-linejoin="round">
<polyline points="585.0,419.8 663.2,464.7 741.4,459.0 819.6,448.6 897.8,449.8 976.0,444.8 1054.2,440.2 1132.4,444.0 1210.6,443.6 1288.8,442.0 1367.0,442.9" stroke="#ff0000"/>
<polyline points="585.0,422.5 663.2,466.0 741.4,453.6 819.6,440.2 897.8,439.0 976.0,433.3 1054.2,430.6 1132.4,434.0 1210.6,434.8 1288.8,433.3 1367.0,431.0" stroke="#008a00"/>
<polyline points="585.0,416.0 663.2,459.0 741.4,447.5 819.6,433.3 897.8,429.4 976.0,421.8 1054.2,414.8 1132.4,416.0 1210.6,413.3 1288.8,411.0 1367.0,407.2" stroke="#0000ff"/>
</g>
<text x="1758.80" y="207.00" font-family="Liberation Sans" font-size="20.29" font-weight="normal" fill="#dedede" textLength="148.38" lengthAdjust="spacingAndGlyphs" xml:space="preserve" >Gamma Log/Log</text>
<rect x="1457" y="214" width="788" height="437" fill="#222222"/>
<rect x="1457" y="645.0" width="788" height="2" fill="#999999"/>
<rect x="1457" y="590.6" width="788" height="2" fill="#999999"/>
<rect x="1457" y="536.2" width="788" height="2" fill="#999999"/>
<rect x="1457" y="481.7" width="788" height="2" fill="#999999"/>
<rect x="1457" y="427.3" width="788" height="2" fill="#999999"/>
<rect x="1457" y="372.9" width="788" height="2" fill="#999999"/>
<rect x="1457" y="318.5" width="788" height="2" fill="#999999"/>
<rect x="1457" y="264.1" width="788" height="2" fill="#999999"/>
<rect x="1456" y="213" width="790" height="2" fill="#999999"/>
<rect x="1456" y="213" width="2" height="439" fill="#999999"/>
<rect x="2244" y="213" width="2" height="439" fill="#999999"/>
<rect x="1456" y="650" width="790" height="2" fill="#999999"/>
<rect x="1448" y="645.0" width="8" height="2" fill="#dddddd"/>
<text x="1437.18" y="653.20" font-family="Liberation Sans" font-size="20.58" font-weight="normal" fill="#dedede" textLength="10.64" lengthAdjust="spacingAndGlyphs" xml:space="preserve" >1</text>
<rect x="1448" y="590.6" width="8" height="2" fill="#dddddd"/>
<text x="1421.20" y="598.78" font-family="Liberation Sans" font-size="20.58" font-weight="normal" fill="#dedede" textLength="26.61" lengthAdjust="spacingAndGlyphs" xml:space="preserve" >1,2</text>
<rect x="1448" y="536.2" width="8" height="2" fill="#dddddd"/>
<text x="1421.20" y="544.36" font-family="Liberation Sans" font-size="20.58" font-weight="normal" fill="#dedede" textLength="26.61" lengthAdjust="spacingAndGlyphs" xml:space="preserve" >1,4</text>
<rect x="1448" y="481.7" width="8" height="2" fill="#dddddd"/>
<text x="1421.20" y="489.94" font-family="Liberation Sans" font-size="20.58" font-weight="normal" fill="#dedede" textLength="26.61" lengthAdjust="spacingAndGlyphs" xml:space="preserve" >1,6</text>
<rect x="1448" y="427.3" width="8" height="2" fill="#dddddd"/>
<text x="1421.20" y="435.52" font-family="Liberation Sans" font-size="20.58" font-weight="normal" fill="#dedede" textLength="26.61" lengthAdjust="spacingAndGlyphs" xml:space="preserve" >1,8</text>
<rect x="1448" y="372.9" width="8" height="2" fill="#dddddd"/>
<text x="1437.18" y="381.10" font-family="Liberation Sans" font-size="20.58" font-weight="normal" fill="#dedede" textLength="10.64" lengthAdjust="spacingAndGlyphs" xml:space="preserve" >2</text>
<rect x="1448" y="318.5" width="8" height="2" fill="#dddddd"/>
<text x="1421.20" y="326.68" font-family="Liberation Sans" font-size="20.58" font-weight="normal" fill="#dedede" textLength="26.61" lengthAdjust="spacingAndGlyphs" xml:space="preserve" >2,2</text>
<rect x="1448" y="264.1" width="8" height="2" fill="#dddddd"/>
<text x="1421.20" y="272.26" font-family="Liberation Sans" font-size="20.58" font-weight="normal" fill="#dedede" textLength="26.61" lengthAdjust="spacingAndGlyphs" xml:space="preserve" >2,4</text>
<rect x="1456.0" y="652" width="2" height="7" fill="#dddddd"/>
<text x="1451.69" y="681.00" font-family="Liberation Sans" font-size="20.58" font-weight="normal" fill="#dedede" textLength="10.64" lengthAdjust="spacingAndGlyphs" xml:space="preserve" >0</text>
<rect x="1534.8" y="652" width="2" height="7" fill="#dddddd"/>
<text x="1525.18" y="681.00" font-family="Liberation Sans" font-size="20.58" font-weight="normal" fill="#dedede" textLength="21.29" lengthAdjust="spacingAndGlyphs" xml:space="preserve" >10</text>
<rect x="1613.6" y="652" width="2" height="7" fill="#dddddd"/>
<text x="1603.98" y="681.00" font-family="Liberation Sans" font-size="20.58" font-weight="normal" fill="#dedede" textLength="21.29" lengthAdjust="spacingAndGlyphs" xml:space="preserve" >20</text>
<rect x="1692.4" y="652" width="2" height="7" fill="#dddddd"/>
<text x="1682.78" y="681.00" font-family="Liberation Sans" font-size="20.58" font-weight="normal" fill="#dedede" textLength="21.29" lengthAdjust="spacingAndGlyphs" xml:space="preserve" >30</text>
<rect x="1771.2" y="652" width="2" height="7" fill="#dddddd"/>
<text x="1761.58" y="681.00" font-family="Liberation Sans" font-size="20.58" font-weight="normal" fill="#dedede" textLength="21.29" lengthAdjust="spacingAndGlyphs" xml:space="preserve" >40</text>
<rect x="1850.0" y="652" width="2" height="7" fill="#dddddd"/>
<text x="1840.38" y="681.00" font-family="Liberation Sans" font-size="20.58" font-weight="normal" fill="#dedede" textLength="21.29" lengthAdjust="spacingAndGlyphs" xml:space="preserve" >50</text>
<rect x="1928.8" y="652" width="2" height="7" fill="#dddddd"/>
<text x="1919.18" y="681.00" font-family="Liberation Sans" font-size="20.58" font-weight="normal" fill="#dedede" textLength="21.29" lengthAdjust="spacingAndGlyphs" xml:space="preserve" >60</text>
<rect x="2007.6" y="652" width="2" height="7" fill="#dddddd"/>
<text x="1997.98" y="681.00" font-family="Liberation Sans" font-size="20.58" font-weight="normal" fill="#dedede" textLength="21.29" lengthAdjust="spacingAndGlyphs" xml:space="preserve" >70</text>
<rect x="2086.4" y="652" width="2" height="7" fill="#dddddd"/>
<text x="2076.78" y="681.00" font-family="Liberation Sans" font-size="20.58" font-weight="normal" fill="#dedede" textLength="21.29" lengthAdjust="spacingAndGlyphs" xml:space="preserve" >80</text>
<rect x="2165.2" y="652" width="2" height="7" fill="#dddddd"/>
<text x="2155.58" y="681.00" font-family="Liberation Sans" font-size="20.58" font-weight="normal" fill="#dedede" textLength="21.29" lengthAdjust="spacingAndGlyphs" xml:space="preserve" >90</text>
<rect x="2244.0" y="652" width="2" height="7" fill="#dddddd"/>
<text x="2229.02" y="681.00" font-family="Liberation Sans" font-size="20.58" font-weight="normal" fill="#dedede" textLength="31.93" lengthAdjust="spacingAndGlyphs" xml:space="preserve" >100</text>
<clipPath id="cGam"><rect x="1450" y="215" width="794" height="435"/></clipPath>
<g clip-path="url(#cGam)" fill="none" stroke-width="3.6" stroke-linejoin="round">
<polyline points="1455.0,567.4 1535.8,318.7 1614.6,308.0 1693.4,311.2 1772.2,302.0 1851.0,304.5 1929.8,305.3 2008.6,293.5 2087.4,287.0 2166.2,285.6 2245.0,295.0" stroke="#8c8c8c"/>
<polyline points="1455.0,567.4 1464.1,485.7 1492.9,414.5 1517.0,385.7 1536.6,368.5 1565.3,353.6 1594.0,343.2 1621.6,335.2 1634.3,332.8 1652.6,329.4 1673.3,325.8 1693.4,322.6 1712.6,320.1 1732.3,317.8 1752.2,315.8 1772.0,314.0 1791.5,312.5 1810.9,311.2 1830.4,310.1 1850.0,309.0 1869.8,308.0 1889.8,307.0 1909.7,306.2 1929.6,305.3 1949.3,304.4 1968.8,303.6 1988.4,302.8 2008.0,302.0 2027.7,301.2 2047.5,300.4 2067.2,299.7 2087.0,299.0 2106.8,298.4 2126.5,297.9 2146.2,297.4 2166.0,297.0 2187.6,296.5 2210.4,296.1 2230.8,295.7 2245.0,295.4" stroke="#ffff00"/>
</g>
<text x="120.00" y="737.70" font-family="Liberation Sans" font-size="42.32" font-weight="normal" fill="#eeeeee" textLength="294.47" lengthAdjust="spacingAndGlyphs" xml:space="preserve" >Avg dE2000: 2,2</text>
<text x="683.90" y="737.70" font-family="Liberation Sans" font-size="42.03" font-weight="normal" fill="#eeeeee" textLength="260.41" lengthAdjust="spacingAndGlyphs" xml:space="preserve" >Avg CCT: 6890</text>
<text x="1211.00" y="737.80" font-family="Liberation Sans" font-size="42.03" font-weight="normal" fill="#eeeeee" textLength="354.24" lengthAdjust="spacingAndGlyphs" xml:space="preserve" >Contrast Ratio: 879</text>
<text x="1788.90" y="737.80" font-family="Liberation Sans" font-size="42.90" font-weight="normal" fill="#eeeeee" textLength="348.23" lengthAdjust="spacingAndGlyphs" xml:space="preserve" >Total Gamma: 2,25</text>
<rect x="2" y="765" width="2288" height="180" fill="#000000"/>
<rect x="338" y="765" width="1" height="180" fill="#0c0c0c"/>
<rect x="2093.5" y="765" width="1" height="180" fill="#0c0c0c"/>
<rect x="368.0" y="774" width="133" height="69" fill="#0a080c"/>
<rect x="368.0" y="843" width="133" height="69" fill="#000000"/>
<rect x="368.0" y="774" width="133" height="139" fill="none" stroke="#f4f4f4" stroke-width="2"/>
<text x="430.09" y="933.00" font-family="Liberation Serif" font-size="18.02" font-weight="normal" fill="#ffffff" textLength="8.83" lengthAdjust="spacingAndGlyphs" xml:space="preserve" >0</text>
<rect x="525.9" y="774" width="133" height="69" fill="#141518"/>
<rect x="525.9" y="843" width="133" height="69" fill="#1b1b1b"/>
<rect x="525.9" y="774" width="133" height="139" fill="none" stroke="#f4f4f4" stroke-width="2"/>
<text x="583.57" y="933.00" font-family="Liberation Serif" font-size="18.02" font-weight="normal" fill="#ffffff" textLength="17.65" lengthAdjust="spacingAndGlyphs" xml:space="preserve" >10</text>
<rect x="683.8" y="774" width="133" height="69" fill="#2a2b2e"/>
<rect x="683.8" y="843" width="133" height="69" fill="#333333"/>
<rect x="683.8" y="774" width="133" height="139" fill="none" stroke="#f4f4f4" stroke-width="2"/>
<text x="741.47" y="933.00" font-family="Liberation Serif" font-size="18.02" font-weight="normal" fill="#ffffff" textLength="17.65" lengthAdjust="spacingAndGlyphs" xml:space="preserve" >20</text>
<rect x="841.7" y="774" width="133" height="69" fill="#47484c"/>
<rect x="841.7" y="843" width="133" height="69" fill="#4d4d4d"/>
<rect x="841.7" y="774" width="133" height="139" fill="none" stroke="#f4f4f4" stroke-width="2"/>
<text x="899.37" y="933.00" font-family="Liberation Serif" font-size="18.02" font-weight="normal" fill="#ffffff" textLength="17.65" lengthAdjust="spacingAndGlyphs" xml:space="preserve" >30</text>
<rect x="999.6" y="774" width="133" height="69" fill="#616266"/>
<rect x="999.6" y="843" width="133" height="69" fill="#666666"/>
<rect x="999.6" y="774" width="133" height="139" fill="none" stroke="#f4f4f4" stroke-width="2"/>
<text x="1057.27" y="933.00" font-family="Liberation Serif" font-size="18.02" font-weight="normal" fill="#ffffff" textLength="17.65" lengthAdjust="spacingAndGlyphs" xml:space="preserve" >40</text>
<rect x="1157.5" y="774" width="133" height="69" fill="#7d7e82"/>
<rect x="1157.5" y="843" width="133" height="69" fill="#7f7f7f"/>
<rect x="1157.5" y="774" width="133" height="139" fill="none" stroke="#f4f4f4" stroke-width="2"/>
<text x="1215.17" y="933.00" font-family="Liberation Serif" font-size="18.02" font-weight="normal" fill="#ffffff" textLength="17.65" lengthAdjust="spacingAndGlyphs" xml:space="preserve" >50</text>
<rect x="1315.4" y="774" width="133" height="69" fill="#98999d"/>
<rect x="1315.4" y="843" width="133" height="69" fill="#999999"/>
<rect x="1315.4" y="774" width="133" height="139" fill="none" stroke="#f4f4f4" stroke-width="2"/>
<text x="1373.07" y="933.00" font-family="Liberation Serif" font-size="18.02" font-weight="normal" fill="#ffffff" textLength="17.65" lengthAdjust="spacingAndGlyphs" xml:space="preserve" >60</text>
<rect x="1473.3" y="774" width="133" height="69" fill="#aeafb3"/>
<rect x="1473.3" y="843" width="133" height="69" fill="#b3b3b3"/>
<rect x="1473.3" y="774" width="133" height="139" fill="none" stroke="#f4f4f4" stroke-width="2"/>
<text x="1530.97" y="933.00" font-family="Liberation Serif" font-size="18.02" font-weight="normal" fill="#ffffff" textLength="17.65" lengthAdjust="spacingAndGlyphs" xml:space="preserve" >70</text>
<rect x="1631.2" y="774" width="133" height="69" fill="#c8c9cd"/>
<rect x="1631.2" y="843" width="133" height="69" fill="#cccccc"/>
<rect x="1631.2" y="774" width="133" height="139" fill="none" stroke="#f4f4f4" stroke-width="2"/>
<text x="1688.87" y="933.00" font-family="Liberation Serif" font-size="18.02" font-weight="normal" fill="#ffffff" textLength="17.65" lengthAdjust="spacingAndGlyphs" xml:space="preserve" >80</text>
<rect x="1789.1" y="774" width="133" height="69" fill="#e1e3e7"/>
<rect x="1789.1" y="843" width="133" height="69" fill="#e5e5e5"/>
<rect x="1789.1" y="774" width="133" height="139" fill="none" stroke="#f4f4f4" stroke-width="2"/>
<text x="1846.77" y="933.00" font-family="Liberation Serif" font-size="18.02" font-weight="normal" fill="#ffffff" textLength="17.65" lengthAdjust="spacingAndGlyphs" xml:space="preserve" >90</text>
<rect x="1947.0" y="774" width="133" height="69" fill="#f4f7fc"/>
<rect x="1947.0" y="843" width="133" height="69" fill="#f7f7f7"/>
<rect x="1947.0" y="774" width="133" height="139" fill="none" stroke="#f4f4f4" stroke-width="2"/>
<text x="2000.26" y="933.00" font-family="Liberation Serif" font-size="18.02" font-weight="normal" fill="#ffffff" textLength="26.48" lengthAdjust="spacingAndGlyphs" xml:space="preserve" >100</text>
<g transform="translate(357.3,828) rotate(-90)"><text x="0.00" y="0.00" font-family="Liberation Sans" font-size="19.13" font-weight="normal" fill="#f0f0f0" textLength="47.99" lengthAdjust="spacingAndGlyphs" xml:space="preserve" >Actual</text></g>
<g transform="translate(357.3,905) rotate(-90)"><text x="0.00" y="0.00" font-family="Liberation Sans" font-size="19.13" font-weight="normal" fill="#f0f0f0" textLength="46.99" lengthAdjust="spacingAndGlyphs" xml:space="preserve" >Target</text></g>
<text x="22.30" y="1018.00" font-family="Liberation Sans" font-size="38.55" font-weight="normal" fill="#eeeeee" textLength="298.60" lengthAdjust="spacingAndGlyphs" xml:space="preserve" >Current Reading</text>
<text x="22.00" y="1075.70" font-family="Liberation Sans" font-size="33.04" font-weight="normal" fill="#eeeeee" textLength="138.98" lengthAdjust="spacingAndGlyphs" xml:space="preserve" >x: 0,3072</text>
<text x="22.00" y="1131.60" font-family="Liberation Sans" font-size="32.75" font-weight="normal" fill="#eeeeee" textLength="119.94" lengthAdjust="spacingAndGlyphs" xml:space="preserve" >y: 0,323</text>
<text x="22.00" y="1187.90" font-family="Liberation Sans" font-size="34.06" font-weight="normal" fill="#eeeeee" textLength="150.64" lengthAdjust="spacingAndGlyphs" xml:space="preserve" >fL: 169,46</text>
<text x="22.00" y="1243.60" font-family="Liberation Sans" font-size="33.33" font-weight="normal" fill="#eeeeee" textLength="215.98" lengthAdjust="spacingAndGlyphs" xml:space="preserve" >cd/m²: 580,61</text>
<rect x="450.5" y="975" width="401.5" height="295" fill="#1c1c1c"/>
<rect x="460" y="984" width="385" height="280" fill="#333333"/>
<g clip-path="url(#cCIE)"><g filter="url(#fBlur)"><rect x="503.00" y="969.50" width="344.30" height="29.98" fill="url(#gC0)"/><rect x="503.00" y="998.48" width="344.30" height="9.98" fill="url(#gC1)"/><rect x="503.00" y="1007.47" width="344.30" height="9.98" fill="url(#gC2)"/><rect x="503.00" y="1016.45" width="344.30" height="9.98" fill="url(#gC3)"/><rect x="503.00" y="1025.44" width="344.30" height="9.98" fill="url(#gC4)"/><rect x="503.00" y="1034.42" width="344.30" height="9.98" fill="url(#gC5)"/><rect x="503.00" y="1043.41" width="344.30" height="9.98" fill="url(#gC6)"/><rect x="503.00" y="1052.39" width="344.30" height="9.98" fill="url(#gC7)"/><rect x="503.00" y="1061.38" width="344.30" height="9.98" fill="url(#gC8)"/><rect x="503.00" y="1070.36" width="344.30" height="9.98" fill="url(#gC9)"/><rect x="503.00" y="1079.35" width="344.30" height="9.98" fill="url(#gC10)"/><rect x="503.00" y="1088.33" width="344.30" height="9.98" fill="url(#gC11)"/><rect x="503.00" y="1097.32" width="344.30" height="9.98" fill="url(#gC12)"/><rect x="503.00" y="1106.30" width="344.30" height="9.98" fill="url(#gC13)"/><rect x="503.00" y="1115.28" width="344.30" height="9.98" fill="url(#gC14)"/><rect x="503.00" y="1124.27" width="344.30" height="9.98" fill="url(#gC15)"/><rect x="503.00" y="1133.25" width="344.30" height="9.98" fill="url(#gC16)"/><rect x="503.00" y="1142.24" width="344.30" height="9.98" fill="url(#gC17)"/><rect x="503.00" y="1151.22" width="344.30" height="9.98" fill="url(#gC18)"/><rect x="503.00" y="1160.21" width="344.30" height="9.98" fill="url(#gC19)"/><rect x="503.00" y="1169.19" width="344.30" height="9.98" fill="url(#gC20)"/><rect x="503.00" y="1178.18" width="344.30" height="9.98" fill="url(#gC21)"/><rect x="503.00" y="1187.16" width="344.30" height="9.98" fill="url(#gC22)"/><rect x="503.00" y="1196.15" width="344.30" height="9.98" fill="url(#gC23)"/><rect x="503.00" y="1205.13" width="344.30" height="9.98" fill="url(#gC24)"/><rect x="503.00" y="1214.12" width="344.30" height="29.98" fill="url(#gC25)"/></g></g>
<rect x="512" y="989" width="326.3" height="235.6" fill="none" stroke="#8f8f8f" stroke-width="2"/>
<g clip-path="url(#cCIE)"><path d="M553.5,1223.6 L837.3,1026.9" stroke="#000" stroke-width="3.2"/></g>
<rect x="664.8" y="1096.9" width="18.3" height="19.1" fill="none" stroke="#000" stroke-width="1.9"/>
<circle cx="634.5" cy="1126.6" r="6.4" fill="#8a8a8a" stroke="#151515" stroke-width="1.9"/>
<circle cx="638.5" cy="1134.6" r="7.3" fill="#fff" stroke="#151515" stroke-width="1.8"/>
<circle cx="638.5" cy="1134.6" r="5.7" fill="#fff" stroke="#151515" stroke-width="1.1"/>
<circle cx="633" cy="1160.2" r="6.1" fill="#1e1e1e"/>
<rect x="503" y="1005.7" width="8" height="1.6" fill="#dddddd"/>
<text x="464.00" y="1013.50" font-family="Liberation Sans" font-size="19.57" font-weight="normal" fill="#dedede" textLength="38.03" lengthAdjust="spacingAndGlyphs" xml:space="preserve" >0,35</text>
<rect x="503" y="1053.0" width="8" height="1.6" fill="#dddddd"/>
<text x="464.00" y="1060.80" font-family="Liberation Sans" font-size="19.57" font-weight="normal" fill="#dedede" textLength="38.03" lengthAdjust="spacingAndGlyphs" xml:space="preserve" >0,34</text>
<rect x="503" y="1100.3" width="8" height="1.6" fill="#dddddd"/>
<text x="464.00" y="1108.10" font-family="Liberation Sans" font-size="19.57" font-weight="normal" fill="#dedede" textLength="38.03" lengthAdjust="spacingAndGlyphs" xml:space="preserve" >0,33</text>
<rect x="503" y="1147.6" width="8" height="1.6" fill="#dddddd"/>
<text x="464.00" y="1155.40" font-family="Liberation Sans" font-size="19.57" font-weight="normal" fill="#dedede" textLength="38.03" lengthAdjust="spacingAndGlyphs" xml:space="preserve" >0,32</text>
<rect x="503" y="1194.9" width="8" height="1.6" fill="#dddddd"/>
<text x="464.00" y="1202.70" font-family="Liberation Sans" font-size="19.57" font-weight="normal" fill="#dedede" textLength="38.03" lengthAdjust="spacingAndGlyphs" xml:space="preserve" >0,31</text>
<rect x="523.8" y="1226" width="1.6" height="6.5" fill="#dddddd"/>
<text x="505.60" y="1254.00" font-family="Liberation Sans" font-size="18.84" font-weight="normal" fill="#dedede" textLength="38.63" lengthAdjust="spacingAndGlyphs" xml:space="preserve" >0,29</text>
<rect x="589.2" y="1226" width="1.6" height="6.5" fill="#dddddd"/>
<text x="576.20" y="1254.00" font-family="Liberation Sans" font-size="18.84" font-weight="normal" fill="#dedede" textLength="27.70" lengthAdjust="spacingAndGlyphs" xml:space="preserve" >0,3</text>
<rect x="654.6" y="1226" width="1.6" height="6.5" fill="#dddddd"/>
<text x="636.00" y="1254.00" font-family="Liberation Sans" font-size="18.84" font-weight="normal" fill="#dedede" textLength="38.93" lengthAdjust="spacingAndGlyphs" xml:space="preserve" >0,31</text>
<rect x="720.0" y="1226" width="1.6" height="6.5" fill="#dddddd"/>
<text x="701.60" y="1254.00" font-family="Liberation Sans" font-size="18.84" font-weight="normal" fill="#dedede" textLength="38.43" lengthAdjust="spacingAndGlyphs" xml:space="preserve" >0,32</text>
<rect x="785.4" y="1226" width="1.6" height="6.5" fill="#dddddd"/>
<text x="766.80" y="1254.00" font-family="Liberation Sans" font-size="18.84" font-weight="normal" fill="#dedede" textLength="38.43" lengthAdjust="spacingAndGlyphs" xml:space="preserve" >0,33</text>
<rect x="862" y="956.5" width="1320" height="288" fill="#000"/>
<rect x="863.5" y="958" width="1316" height="19" fill="#303030"/>
<rect x="863.5" y="977" width="1316" height="19" fill="#171717"/>
<rect x="863.5" y="996.00" width="1316" height="35.42" fill="#424242"/>
<text x="880.00" y="1022.00" font-family="Liberation Sans" font-size="23.19" font-weight="bold" fill="#eeeeee" textLength="82.33" lengthAdjust="spacingAndGlyphs" xml:space="preserve" >x: CIE31</text>
<text x="1078.30" y="1022.00" font-family="Liberation Sans" font-size="23.48" font-weight="normal" fill="#eeeeee" textLength="51.95" lengthAdjust="spacingAndGlyphs" xml:space="preserve" >0,300</text>
<text x="1179.00" y="1022.00" font-family="Liberation Sans" font-size="23.48" font-weight="normal" fill="#eeeeee" textLength="51.95" lengthAdjust="spacingAndGlyphs" xml:space="preserve" >0,307</text>
<text x="1279.70" y="1022.00" font-family="Liberation Sans" font-size="23.48" font-weight="normal" fill="#eeeeee" textLength="51.95" lengthAdjust="spacingAndGlyphs" xml:space="preserve" >0,307</text>
<text x="1380.40" y="1022.00" font-family="Liberation Sans" font-size="23.48" font-weight="normal" fill="#eeeeee" textLength="51.95" lengthAdjust="spacingAndGlyphs" xml:space="preserve" >0,307</text>
<text x="1481.10" y="1022.00" font-family="Liberation Sans" font-size="23.48" font-weight="normal" fill="#eeeeee" textLength="51.95" lengthAdjust="spacingAndGlyphs" xml:space="preserve" >0,306</text>
<text x="1581.80" y="1022.00" font-family="Liberation Sans" font-size="23.48" font-weight="normal" fill="#eeeeee" textLength="51.95" lengthAdjust="spacingAndGlyphs" xml:space="preserve" >0,307</text>
<text x="1682.50" y="1022.00" font-family="Liberation Sans" font-size="23.48" font-weight="normal" fill="#eeeeee" textLength="51.95" lengthAdjust="spacingAndGlyphs" xml:space="preserve" >0,307</text>
<text x="1783.20" y="1022.00" font-family="Liberation Sans" font-size="23.48" font-weight="normal" fill="#eeeeee" textLength="51.95" lengthAdjust="spacingAndGlyphs" xml:space="preserve" >0,307</text>
<text x="1883.90" y="1022.00" font-family="Liberation Sans" font-size="23.48" font-weight="normal" fill="#eeeeee" textLength="51.95" lengthAdjust="spacingAndGlyphs" xml:space="preserve" >0,307</text>
<text x="1984.60" y="1022.00" font-family="Liberation Sans" font-size="23.48" font-weight="normal" fill="#eeeeee" textLength="51.95" lengthAdjust="spacingAndGlyphs" xml:space="preserve" >0,308</text>
<text x="2085.30" y="1022.00" font-family="Liberation Sans" font-size="23.48" font-weight="normal" fill="#eeeeee" textLength="51.95" lengthAdjust="spacingAndGlyphs" xml:space="preserve" >0,307</text>
<rect x="863.5" y="1031.42" width="1316" height="35.42" fill="#808080"/>
<text x="880.00" y="1057.42" font-family="Liberation Sans" font-size="23.19" font-weight="bold" fill="#eeeeee" textLength="82.33" lengthAdjust="spacingAndGlyphs" xml:space="preserve" >y: CIE31</text>
<text x="1078.30" y="1057.42" font-family="Liberation Sans" font-size="23.48" font-weight="normal" fill="#eeeeee" textLength="51.95" lengthAdjust="spacingAndGlyphs" xml:space="preserve" >0,276</text>
<text x="1179.00" y="1057.42" font-family="Liberation Sans" font-size="23.48" font-weight="normal" fill="#eeeeee" textLength="51.95" lengthAdjust="spacingAndGlyphs" xml:space="preserve" >0,317</text>
<text x="1279.70" y="1057.42" font-family="Liberation Sans" font-size="23.48" font-weight="normal" fill="#eeeeee" textLength="51.95" lengthAdjust="spacingAndGlyphs" xml:space="preserve" >0,324</text>
<text x="1380.40" y="1057.42" font-family="Liberation Sans" font-size="23.48" font-weight="normal" fill="#eeeeee" textLength="51.95" lengthAdjust="spacingAndGlyphs" xml:space="preserve" >0,325</text>
<text x="1481.10" y="1057.42" font-family="Liberation Sans" font-size="23.48" font-weight="normal" fill="#eeeeee" textLength="51.95" lengthAdjust="spacingAndGlyphs" xml:space="preserve" >0,324</text>
<text x="1581.80" y="1057.42" font-family="Liberation Sans" font-size="23.48" font-weight="normal" fill="#eeeeee" textLength="51.95" lengthAdjust="spacingAndGlyphs" xml:space="preserve" >0,324</text>
<text x="1682.50" y="1057.42" font-family="Liberation Sans" font-size="23.48" font-weight="normal" fill="#eeeeee" textLength="51.95" lengthAdjust="spacingAndGlyphs" xml:space="preserve" >0,323</text>
<text x="1783.20" y="1057.42" font-family="Liberation Sans" font-size="23.48" font-weight="normal" fill="#eeeeee" textLength="51.95" lengthAdjust="spacingAndGlyphs" xml:space="preserve" >0,323</text>
<text x="1883.90" y="1057.42" font-family="Liberation Sans" font-size="23.48" font-weight="normal" fill="#eeeeee" textLength="51.95" lengthAdjust="spacingAndGlyphs" xml:space="preserve" >0,323</text>
<text x="1984.60" y="1057.42" font-family="Liberation Sans" font-size="23.48" font-weight="normal" fill="#eeeeee" textLength="51.95" lengthAdjust="spacingAndGlyphs" xml:space="preserve" >0,323</text>
<text x="2085.30" y="1057.42" font-family="Liberation Sans" font-size="23.48" font-weight="normal" fill="#eeeeee" textLength="51.95" lengthAdjust="spacingAndGlyphs" xml:space="preserve" >0,323</text>
<rect x="863.5" y="1066.84" width="1316" height="35.42" fill="#424242"/>
<text x="880.00" y="1092.84" font-family="Liberation Sans" font-size="23.19" font-weight="bold" fill="#eeeeee" textLength="12.74" lengthAdjust="spacingAndGlyphs" xml:space="preserve" >Y</text>
<text x="1078.30" y="1092.84" font-family="Liberation Sans" font-size="23.48" font-weight="normal" fill="#eeeeee" textLength="51.95" lengthAdjust="spacingAndGlyphs" xml:space="preserve" >0,660</text>
<text x="1179.00" y="1092.84" font-family="Liberation Sans" font-size="23.48" font-weight="normal" fill="#eeeeee" textLength="51.95" lengthAdjust="spacingAndGlyphs" xml:space="preserve" >3,958</text>
<text x="1279.70" y="1092.84" font-family="Liberation Sans" font-size="23.48" font-weight="normal" fill="#eeeeee" textLength="61.95" lengthAdjust="spacingAndGlyphs" xml:space="preserve" >16,115</text>
<text x="1380.40" y="1092.84" font-family="Liberation Sans" font-size="23.48" font-weight="normal" fill="#eeeeee" textLength="63.49" lengthAdjust="spacingAndGlyphs" xml:space="preserve" >39,625</text>
<text x="1481.10" y="1092.84" font-family="Liberation Sans" font-size="23.48" font-weight="normal" fill="#eeeeee" textLength="63.49" lengthAdjust="spacingAndGlyphs" xml:space="preserve" >73,995</text>
<text x="1581.80" y="1092.84" font-family="Liberation Sans" font-size="23.48" font-weight="normal" fill="#eeeeee" textLength="75.04" lengthAdjust="spacingAndGlyphs" xml:space="preserve" >123,810</text>
<text x="1682.50" y="1092.84" font-family="Liberation Sans" font-size="23.48" font-weight="normal" fill="#eeeeee" textLength="75.04" lengthAdjust="spacingAndGlyphs" xml:space="preserve" >185,084</text>
<text x="1783.20" y="1092.84" font-family="Liberation Sans" font-size="23.48" font-weight="normal" fill="#eeeeee" textLength="75.04" lengthAdjust="spacingAndGlyphs" xml:space="preserve" >255,671</text>
<text x="1883.90" y="1092.84" font-family="Liberation Sans" font-size="23.48" font-weight="normal" fill="#eeeeee" textLength="75.04" lengthAdjust="spacingAndGlyphs" xml:space="preserve" >347,200</text>
<text x="1984.60" y="1092.84" font-family="Liberation Sans" font-size="23.48" font-weight="normal" fill="#eeeeee" textLength="75.04" lengthAdjust="spacingAndGlyphs" xml:space="preserve" >457,477</text>
<text x="2085.30" y="1092.84" font-family="Liberation Sans" font-size="23.48" font-weight="normal" fill="#eeeeee" textLength="75.04" lengthAdjust="spacingAndGlyphs" xml:space="preserve" >580,610</text>
<rect x="863.5" y="1102.26" width="1316" height="35.42" fill="#808080"/>
<text x="880.00" y="1128.26" font-family="Liberation Sans" font-size="23.19" font-weight="bold" fill="#eeeeee" textLength="85.97" lengthAdjust="spacingAndGlyphs" xml:space="preserve" >Target Y</text>
<text x="1078.30" y="1128.26" font-family="Liberation Sans" font-size="23.48" font-weight="normal" fill="#eeeeee" textLength="51.95" lengthAdjust="spacingAndGlyphs" xml:space="preserve" >0,000</text>
<text x="1179.00" y="1128.26" font-family="Liberation Sans" font-size="23.48" font-weight="normal" fill="#eeeeee" textLength="51.95" lengthAdjust="spacingAndGlyphs" xml:space="preserve" >5,998</text>
<text x="1279.70" y="1128.26" font-family="Liberation Sans" font-size="23.48" font-weight="normal" fill="#eeeeee" textLength="63.49" lengthAdjust="spacingAndGlyphs" xml:space="preserve" >19,221</text>
<text x="1380.40" y="1128.26" font-family="Liberation Sans" font-size="23.48" font-weight="normal" fill="#eeeeee" textLength="63.49" lengthAdjust="spacingAndGlyphs" xml:space="preserve" >41,962</text>
<text x="1481.10" y="1128.26" font-family="Liberation Sans" font-size="23.48" font-weight="normal" fill="#eeeeee" textLength="63.49" lengthAdjust="spacingAndGlyphs" xml:space="preserve" >77,145</text>
<text x="1581.80" y="1128.26" font-family="Liberation Sans" font-size="23.48" font-weight="normal" fill="#eeeeee" textLength="75.04" lengthAdjust="spacingAndGlyphs" xml:space="preserve" >125,331</text>
<text x="1682.50" y="1128.26" font-family="Liberation Sans" font-size="23.48" font-weight="normal" fill="#eeeeee" textLength="75.04" lengthAdjust="spacingAndGlyphs" xml:space="preserve" >184,951</text>
<text x="1783.20" y="1128.26" font-family="Liberation Sans" font-size="23.48" font-weight="normal" fill="#eeeeee" textLength="75.04" lengthAdjust="spacingAndGlyphs" xml:space="preserve" >258,488</text>
<text x="1883.90" y="1128.26" font-family="Liberation Sans" font-size="23.48" font-weight="normal" fill="#eeeeee" textLength="75.04" lengthAdjust="spacingAndGlyphs" xml:space="preserve" >350,588</text>
<text x="1984.60" y="1128.26" font-family="Liberation Sans" font-size="23.48" font-weight="normal" fill="#eeeeee" textLength="75.04" lengthAdjust="spacingAndGlyphs" xml:space="preserve" >459,436</text>
<text x="2085.30" y="1128.26" font-family="Liberation Sans" font-size="23.48" font-weight="normal" fill="#eeeeee" textLength="75.04" lengthAdjust="spacingAndGlyphs" xml:space="preserve" >580,610</text>
<rect x="863.5" y="1137.68" width="1316" height="35.42" fill="#424242"/>
<text x="880.00" y="1163.68" font-family="Liberation Sans" font-size="23.19" font-weight="bold" fill="#eeeeee" textLength="174.48" lengthAdjust="spacingAndGlyphs" xml:space="preserve" >Gamma Log/Log</text>
<text x="1078.30" y="1163.68" font-family="Liberation Sans" font-size="23.48" font-weight="normal" fill="#eeeeee" textLength="51.95" lengthAdjust="spacingAndGlyphs" xml:space="preserve" >1,278</text>
<text x="1179.00" y="1163.68" font-family="Liberation Sans" font-size="23.48" font-weight="normal" fill="#eeeeee" textLength="51.95" lengthAdjust="spacingAndGlyphs" xml:space="preserve" >2,185</text>
<text x="1279.70" y="1163.68" font-family="Liberation Sans" font-size="23.48" font-weight="normal" fill="#eeeeee" textLength="51.95" lengthAdjust="spacingAndGlyphs" xml:space="preserve" >2,227</text>
<text x="1380.40" y="1163.68" font-family="Liberation Sans" font-size="23.48" font-weight="normal" fill="#eeeeee" textLength="51.95" lengthAdjust="spacingAndGlyphs" xml:space="preserve" >2,218</text>
<text x="1481.10" y="1163.68" font-family="Liberation Sans" font-size="23.48" font-weight="normal" fill="#eeeeee" textLength="51.95" lengthAdjust="spacingAndGlyphs" xml:space="preserve" >2,248</text>
<text x="1581.80" y="1163.68" font-family="Liberation Sans" font-size="23.48" font-weight="normal" fill="#eeeeee" textLength="51.95" lengthAdjust="spacingAndGlyphs" xml:space="preserve" >2,242</text>
<text x="1682.50" y="1163.68" font-family="Liberation Sans" font-size="23.48" font-weight="normal" fill="#eeeeee" textLength="51.95" lengthAdjust="spacingAndGlyphs" xml:space="preserve" >2,238</text>
<text x="1783.20" y="1163.68" font-family="Liberation Sans" font-size="23.48" font-weight="normal" fill="#eeeeee" textLength="51.95" lengthAdjust="spacingAndGlyphs" xml:space="preserve" >2,282</text>
<text x="1883.90" y="1163.68" font-family="Liberation Sans" font-size="23.48" font-weight="normal" fill="#eeeeee" textLength="51.95" lengthAdjust="spacingAndGlyphs" xml:space="preserve" >2,304</text>
<text x="1984.60" y="1163.68" font-family="Liberation Sans" font-size="23.48" font-weight="normal" fill="#eeeeee" textLength="51.95" lengthAdjust="spacingAndGlyphs" xml:space="preserve" >2,310</text>
<text x="2085.30" y="1163.68" font-family="Liberation Sans" font-size="23.48" font-weight="normal" fill="#eeeeee" textLength="51.95" lengthAdjust="spacingAndGlyphs" xml:space="preserve" >2,275</text>
<rect x="863.5" y="1173.10" width="1316" height="35.42" fill="#808080"/>
<text x="880.00" y="1199.10" font-family="Liberation Sans" font-size="23.19" font-weight="bold" fill="#eeeeee" textLength="40.20" lengthAdjust="spacingAndGlyphs" xml:space="preserve" >CCT</text>
<text x="1078.30" y="1199.10" font-family="Liberation Sans" font-size="23.48" font-weight="normal" fill="#eeeeee" textLength="86.58" lengthAdjust="spacingAndGlyphs" xml:space="preserve" >8437,000</text>
<text x="1179.00" y="1199.10" font-family="Liberation Sans" font-size="23.48" font-weight="normal" fill="#eeeeee" textLength="86.58" lengthAdjust="spacingAndGlyphs" xml:space="preserve" >6979,000</text>
<text x="1279.70" y="1199.10" font-family="Liberation Sans" font-size="23.48" font-weight="normal" fill="#eeeeee" textLength="86.58" lengthAdjust="spacingAndGlyphs" xml:space="preserve" >6874,000</text>
<text x="1380.40" y="1199.10" font-family="Liberation Sans" font-size="23.48" font-weight="normal" fill="#eeeeee" textLength="86.58" lengthAdjust="spacingAndGlyphs" xml:space="preserve" >6885,000</text>
<text x="1481.10" y="1199.10" font-family="Liberation Sans" font-size="23.48" font-weight="normal" fill="#eeeeee" textLength="86.58" lengthAdjust="spacingAndGlyphs" xml:space="preserve" >6909,000</text>
<text x="1581.80" y="1199.10" font-family="Liberation Sans" font-size="23.48" font-weight="normal" fill="#eeeeee" textLength="86.58" lengthAdjust="spacingAndGlyphs" xml:space="preserve" >6891,000</text>
<text x="1682.50" y="1199.10" font-family="Liberation Sans" font-size="23.48" font-weight="normal" fill="#eeeeee" textLength="86.58" lengthAdjust="spacingAndGlyphs" xml:space="preserve" >6881,000</text>
<text x="1783.20" y="1199.10" font-family="Liberation Sans" font-size="23.48" font-weight="normal" fill="#eeeeee" textLength="86.58" lengthAdjust="spacingAndGlyphs" xml:space="preserve" >6889,000</text>
<text x="1883.90" y="1199.10" font-family="Liberation Sans" font-size="23.48" font-weight="normal" fill="#eeeeee" textLength="86.58" lengthAdjust="spacingAndGlyphs" xml:space="preserve" >6874,000</text>
<text x="1984.60" y="1199.10" font-family="Liberation Sans" font-size="23.48" font-weight="normal" fill="#eeeeee" textLength="86.58" lengthAdjust="spacingAndGlyphs" xml:space="preserve" >6853,000</text>
<text x="2085.30" y="1199.10" font-family="Liberation Sans" font-size="23.48" font-weight="normal" fill="#eeeeee" textLength="86.58" lengthAdjust="spacingAndGlyphs" xml:space="preserve" >6870,000</text>
<rect x="863.5" y="1208.52" width="1316" height="35.42" fill="#424242"/>
<text x="880.00" y="1234.52" font-family="Liberation Sans" font-size="23.19" font-weight="bold" fill="#eeeeee" textLength="85.36" lengthAdjust="spacingAndGlyphs" xml:space="preserve" >ΔE 2000</text>
<text x="1078.30" y="1234.52" font-family="Liberation Sans" font-size="23.48" font-weight="normal" fill="#eeeeee" textLength="51.95" lengthAdjust="spacingAndGlyphs" xml:space="preserve" >1,304</text>
<text x="1179.00" y="1234.52" font-family="Liberation Sans" font-size="23.48" font-weight="normal" fill="#eeeeee" textLength="51.95" lengthAdjust="spacingAndGlyphs" xml:space="preserve" >2,207</text>
<text x="1279.70" y="1234.52" font-family="Liberation Sans" font-size="23.48" font-weight="normal" fill="#eeeeee" textLength="51.95" lengthAdjust="spacingAndGlyphs" xml:space="preserve" >1,744</text>
<text x="1380.40" y="1234.52" font-family="Liberation Sans" font-size="23.48" font-weight="normal" fill="#eeeeee" textLength="51.95" lengthAdjust="spacingAndGlyphs" xml:space="preserve" >1,460</text>
<text x="1481.10" y="1234.52" font-family="Liberation Sans" font-size="23.48" font-weight="normal" fill="#eeeeee" textLength="51.95" lengthAdjust="spacingAndGlyphs" xml:space="preserve" >1,799</text>
<text x="1581.80" y="1234.52" font-family="Liberation Sans" font-size="23.48" font-weight="normal" fill="#eeeeee" textLength="51.95" lengthAdjust="spacingAndGlyphs" xml:space="preserve" >1,867</text>
<text x="1682.50" y="1234.52" font-family="Liberation Sans" font-size="23.48" font-weight="normal" fill="#eeeeee" textLength="51.95" lengthAdjust="spacingAndGlyphs" xml:space="preserve" >2,178</text>
<text x="1783.20" y="1234.52" font-family="Liberation Sans" font-size="23.48" font-weight="normal" fill="#eeeeee" textLength="51.95" lengthAdjust="spacingAndGlyphs" xml:space="preserve" >2,491</text>
<text x="1883.90" y="1234.52" font-family="Liberation Sans" font-size="23.48" font-weight="normal" fill="#eeeeee" textLength="51.95" lengthAdjust="spacingAndGlyphs" xml:space="preserve" >2,758</text>
<text x="1984.60" y="1234.52" font-family="Liberation Sans" font-size="23.48" font-weight="normal" fill="#eeeeee" textLength="51.95" lengthAdjust="spacingAndGlyphs" xml:space="preserve" >2,857</text>
<text x="2085.30" y="1234.52" font-family="Liberation Sans" font-size="23.48" font-weight="normal" fill="#eeeeee" textLength="51.95" lengthAdjust="spacingAndGlyphs" xml:space="preserve" >3,131</text>
<text x="1117.24" y="985.20" font-family="Liberation Sans" font-size="20.00" font-weight="bold" fill="#ffffff" textLength="10.34" lengthAdjust="spacingAndGlyphs" xml:space="preserve" >0</text>
<text x="1212.78" y="985.20" font-family="Liberation Sans" font-size="20.00" font-weight="bold" fill="#ffffff" textLength="20.69" lengthAdjust="spacingAndGlyphs" xml:space="preserve" >10</text>
<text x="1313.48" y="985.20" font-family="Liberation Sans" font-size="20.00" font-weight="bold" fill="#ffffff" textLength="20.69" lengthAdjust="spacingAndGlyphs" xml:space="preserve" >20</text>
<text x="1414.18" y="985.20" font-family="Liberation Sans" font-size="20.00" font-weight="bold" fill="#ffffff" textLength="20.69" lengthAdjust="spacingAndGlyphs" xml:space="preserve" >30</text>
<text x="1514.88" y="985.20" font-family="Liberation Sans" font-size="20.00" font-weight="bold" fill="#ffffff" textLength="20.69" lengthAdjust="spacingAndGlyphs" xml:space="preserve" >40</text>
<text x="1615.58" y="985.20" font-family="Liberation Sans" font-size="20.00" font-weight="bold" fill="#ffffff" textLength="20.69" lengthAdjust="spacingAndGlyphs" xml:space="preserve" >50</text>
<text x="1716.28" y="985.20" font-family="Liberation Sans" font-size="20.00" font-weight="bold" fill="#ffffff" textLength="20.69" lengthAdjust="spacingAndGlyphs" xml:space="preserve" >60</text>
<text x="1816.98" y="985.20" font-family="Liberation Sans" font-size="20.00" font-weight="bold" fill="#ffffff" textLength="20.69" lengthAdjust="spacingAndGlyphs" xml:space="preserve" >70</text>
<text x="1917.68" y="985.20" font-family="Liberation Sans" font-size="20.00" font-weight="bold" fill="#ffffff" textLength="20.69" lengthAdjust="spacingAndGlyphs" xml:space="preserve" >80</text>
<text x="2018.38" y="985.20" font-family="Liberation Sans" font-size="20.00" font-weight="bold" fill="#ffffff" textLength="20.69" lengthAdjust="spacingAndGlyphs" xml:space="preserve" >90</text>
<text x="2113.87" y="985.20" font-family="Liberation Sans" font-size="20.00" font-weight="bold" fill="#ffffff" textLength="31.03" lengthAdjust="spacingAndGlyphs" xml:space="preserve" >100</text>
<rect x="2" y="1329" width="2288" height="61" fill="url(#gBar)"/>
<rect x="2.0" y="1329" width="149.8" height="61" rx="4" fill="url(#gSw)"/>
<rect x="7.0" y="1334" width="139.8" height="35.8" rx="3.5" fill="#000000"/>
<text x="73.92" y="1384.80" font-family="Liberation Serif" font-size="11.91" font-weight="normal" fill="#333333" textLength="5.95" lengthAdjust="spacingAndGlyphs" xml:space="preserve" >0</text>
<rect x="154.2" y="1329" width="149.8" height="61" rx="4" fill="url(#gSw)"/>
<rect x="159.2" y="1334" width="139.8" height="35.8" rx="3.5" fill="#1b1b1b"/>
<text x="223.15" y="1384.80" font-family="Liberation Serif" font-size="11.91" font-weight="normal" fill="#333333" textLength="11.91" lengthAdjust="spacingAndGlyphs" xml:space="preserve" >10</text>
<rect x="306.4" y="1329" width="149.8" height="61" rx="4" fill="url(#gSw)"/>
<rect x="311.4" y="1334" width="139.8" height="35.8" rx="3.5" fill="#333333"/>
<text x="375.35" y="1384.80" font-family="Liberation Serif" font-size="11.91" font-weight="normal" fill="#333333" textLength="11.91" lengthAdjust="spacingAndGlyphs" xml:space="preserve" >20</text>
<rect x="458.6" y="1329" width="149.8" height="61" rx="4" fill="url(#gSw)"/>
<rect x="463.6" y="1334" width="139.8" height="35.8" rx="3.5" fill="#4d4d4d"/>
<text x="527.55" y="1384.80" font-family="Liberation Serif" font-size="11.91" font-weight="normal" fill="#333333" textLength="11.91" lengthAdjust="spacingAndGlyphs" xml:space="preserve" >30</text>
<rect x="610.8" y="1329" width="149.8" height="61" rx="4" fill="url(#gSw)"/>
<rect x="615.8" y="1334" width="139.8" height="35.8" rx="3.5" fill="#666666"/>
<text x="679.75" y="1384.80" font-family="Liberation Serif" font-size="11.91" font-weight="normal" fill="#333333" textLength="11.91" lengthAdjust="spacingAndGlyphs" xml:space="preserve" >40</text>
<rect x="763.0" y="1329" width="149.8" height="61" rx="4" fill="url(#gSw)"/>
<rect x="768.0" y="1334" width="139.8" height="35.8" rx="3.5" fill="#7f7f7f"/>
<text x="831.95" y="1384.80" font-family="Liberation Serif" font-size="11.91" font-weight="normal" fill="#333333" textLength="11.91" lengthAdjust="spacingAndGlyphs" xml:space="preserve" >50</text>
<rect x="915.2" y="1329" width="149.8" height="61" rx="4" fill="url(#gSw)"/>
<rect x="920.2" y="1334" width="139.8" height="35.8" rx="3.5" fill="#999999"/>
<text x="984.15" y="1384.80" font-family="Liberation Serif" font-size="11.91" font-weight="normal" fill="#333333" textLength="11.91" lengthAdjust="spacingAndGlyphs" xml:space="preserve" >60</text>
<rect x="1067.4" y="1329" width="149.8" height="61" rx="4" fill="url(#gSw)"/>
<rect x="1072.4" y="1334" width="139.8" height="35.8" rx="3.5" fill="#b3b3b3"/>
<text x="1136.35" y="1384.80" font-family="Liberation Serif" font-size="11.91" font-weight="normal" fill="#333333" textLength="11.91" lengthAdjust="spacingAndGlyphs" xml:space="preserve" >70</text>
<rect x="1219.6" y="1329" width="149.8" height="61" rx="4" fill="url(#gSw)"/>
<rect x="1224.6" y="1334" width="139.8" height="35.8" rx="3.5" fill="#cccccc"/>
<text x="1288.55" y="1384.80" font-family="Liberation Serif" font-size="11.91" font-weight="normal" fill="#333333" textLength="11.91" lengthAdjust="spacingAndGlyphs" xml:space="preserve" >80</text>
<rect x="1371.8" y="1329" width="149.8" height="61" rx="4" fill="url(#gSw)"/>
<rect x="1376.8" y="1334" width="139.8" height="35.8" rx="3.5" fill="#e5e5e5"/>
<text x="1440.75" y="1384.80" font-family="Liberation Serif" font-size="11.91" font-weight="normal" fill="#333333" textLength="11.91" lengthAdjust="spacingAndGlyphs" xml:space="preserve" >90</text>
<rect x="1522" y="1329" width="150" height="61" rx="4" fill="#2c2c2c"/>
<rect x="1522" y="1329" width="150" height="12" rx="4" fill="#1c1c1c"/>
<rect x="1526.8" y="1333.8" width="140.2" height="36.1" rx="3.5" fill="#ffffff"/>
<text x="1588.08" y="1384.80" font-family="Liberation Serif" font-size="12.52" font-weight="bold" fill="#ffffff" textLength="17.84" lengthAdjust="spacingAndGlyphs" xml:space="preserve" >100</text>
<rect x="1969" y="1329" width="48" height="18" rx="3" fill="url(#gTr)"/>
<circle cx="1993" cy="1338" r="7" fill="url(#gTrC)"/>
<path d="M1988.5,1340 L1993,1335.5 L1997.5,1340Z" fill="#333"/>
<rect x="1969" y="1348" width="48" height="42" rx="3" fill="url(#gTr)"/>
<rect x="1978" y="1354" width="29" height="29" rx="3" fill="url(#gStopBox)" stroke="#222" stroke-width="2.5"/>
<rect x="1986" y="1362" width="13" height="13" fill="url(#gStopSq)"/>
<rect x="2018.0" y="1329" width="45.3" height="30" fill="url(#gTr)"/>
<circle cx="2041.2" cy="1344" r="9.5" fill="url(#gTrC)"/>
<rect x="2064.3" y="1329" width="44.0" height="30" fill="url(#gTr)"/>
<circle cx="2086.8" cy="1344" r="9.5" fill="url(#gTrC)"/>
<rect x="2109.3" y="1329" width="44.0" height="30" fill="url(#gTr)"/>
<circle cx="2131.8" cy="1344" r="9.5" fill="url(#gTrC)"/>
<rect x="2154.3" y="1329" width="44.0" height="30" fill="url(#gTr)"/>
<circle cx="2176.8" cy="1344" r="9.5" fill="url(#gTrC)"/>
<rect x="2199.3" y="1329" width="43.7" height="30" fill="url(#gTr)"/>
<circle cx="2221.7" cy="1344" r="9.5" fill="url(#gTrC)"/>
<rect x="2037.2" y="1339.5" width="8" height="8" fill="#333"/>
<path d="M2083.3,1338.5 L2091.8,1344.5 L2083.3,1350.5Z" fill="#333"/>
<path d="M2128.8,1339 h-2.5 v10 h2.5 M2134.8,1339 h2.5 v10 h-2.5" fill="none" stroke="#333" stroke-width="1.8"/>
<circle cx="2130.6" cy="1344" r="0.9" fill="#333"/><circle cx="2133.3" cy="1344" r="0.9" fill="#333"/>
<path d="M2176.8,1344 c-2,-3 -6,-3 -6,0 c0,3 4,3 6,0 c2,-3 6,-3 6,0 c0,3 -4,3 -6,0Z" fill="none" stroke="#333" stroke-width="1.8"/>
<path d="M2216.5,1345 A5,5 0 0 1 2224.8,1340.2 M2226.8,1343 A5,5 0 0 1 2218.5,1347.8" fill="none" stroke="#2e2e2e" stroke-width="2"/>
<path d="M2227.2,1336.8 L2227.5,1342.6 L2221.8,1342.2Z M2216.1,1351.2 L2215.8,1345.4 L2221.5,1345.8Z" fill="#2e2e2e"/>
<circle cx="2268" cy="1344" r="9.5" fill="#2b2b2b"/>
<rect x="2018" y="1360" width="136" height="30" rx="2" fill="url(#gTr)"/>
<rect x="2155" y="1360" width="135" height="30" rx="2" fill="url(#gTr)"/>
<circle cx="2049" cy="1375" r="9.5" fill="url(#gTrC)"/>
<circle cx="2262" cy="1375" r="9.5" fill="url(#gTrC)"/>
<path d="M2050,1370 L2046,1375 L2050,1380 M2054,1370 L2050,1375 L2054,1380" fill="none" stroke="#333" stroke-width="1.6"/>
<path d="M2258,1370 L2262,1375 L2258,1380 M2262,1370 L2266,1375 L2262,1380" fill="none" stroke="#333" stroke-width="1.6"/>
<text x="2076.00" y="1382.70" font-family="Liberation Sans" font-size="22.46" font-weight="normal" fill="#333333" textLength="49.35" lengthAdjust="spacingAndGlyphs" xml:space="preserve" stroke="#333333" stroke-width="0.6">Back</text>
<text x="2183.00" y="1382.70" font-family="Liberation Sans" font-size="22.46" font-weight="normal" fill="#333333" textLength="50.73" lengthAdjust="spacingAndGlyphs" xml:space="preserve" stroke="#333333" stroke-width="0.6">Next</text>
<rect x="0" y="31" width="1" height="1361" fill="#8a8a8a"/>
<rect x="1" y="31" width="1" height="1361" fill="#1e1e1e"/>
<rect x="2283" y="97" width="9" height="1293" fill="url(#gRE)"/>
<rect x="2291" y="31" width="1" height="1361" fill="#161616"/>
<rect x="2292" y="0" width="1" height="1392" fill="#8a8a8a"/>
<rect x="0" y="1390" width="2293" height="2" fill="#777777"/></svg></body></html>
